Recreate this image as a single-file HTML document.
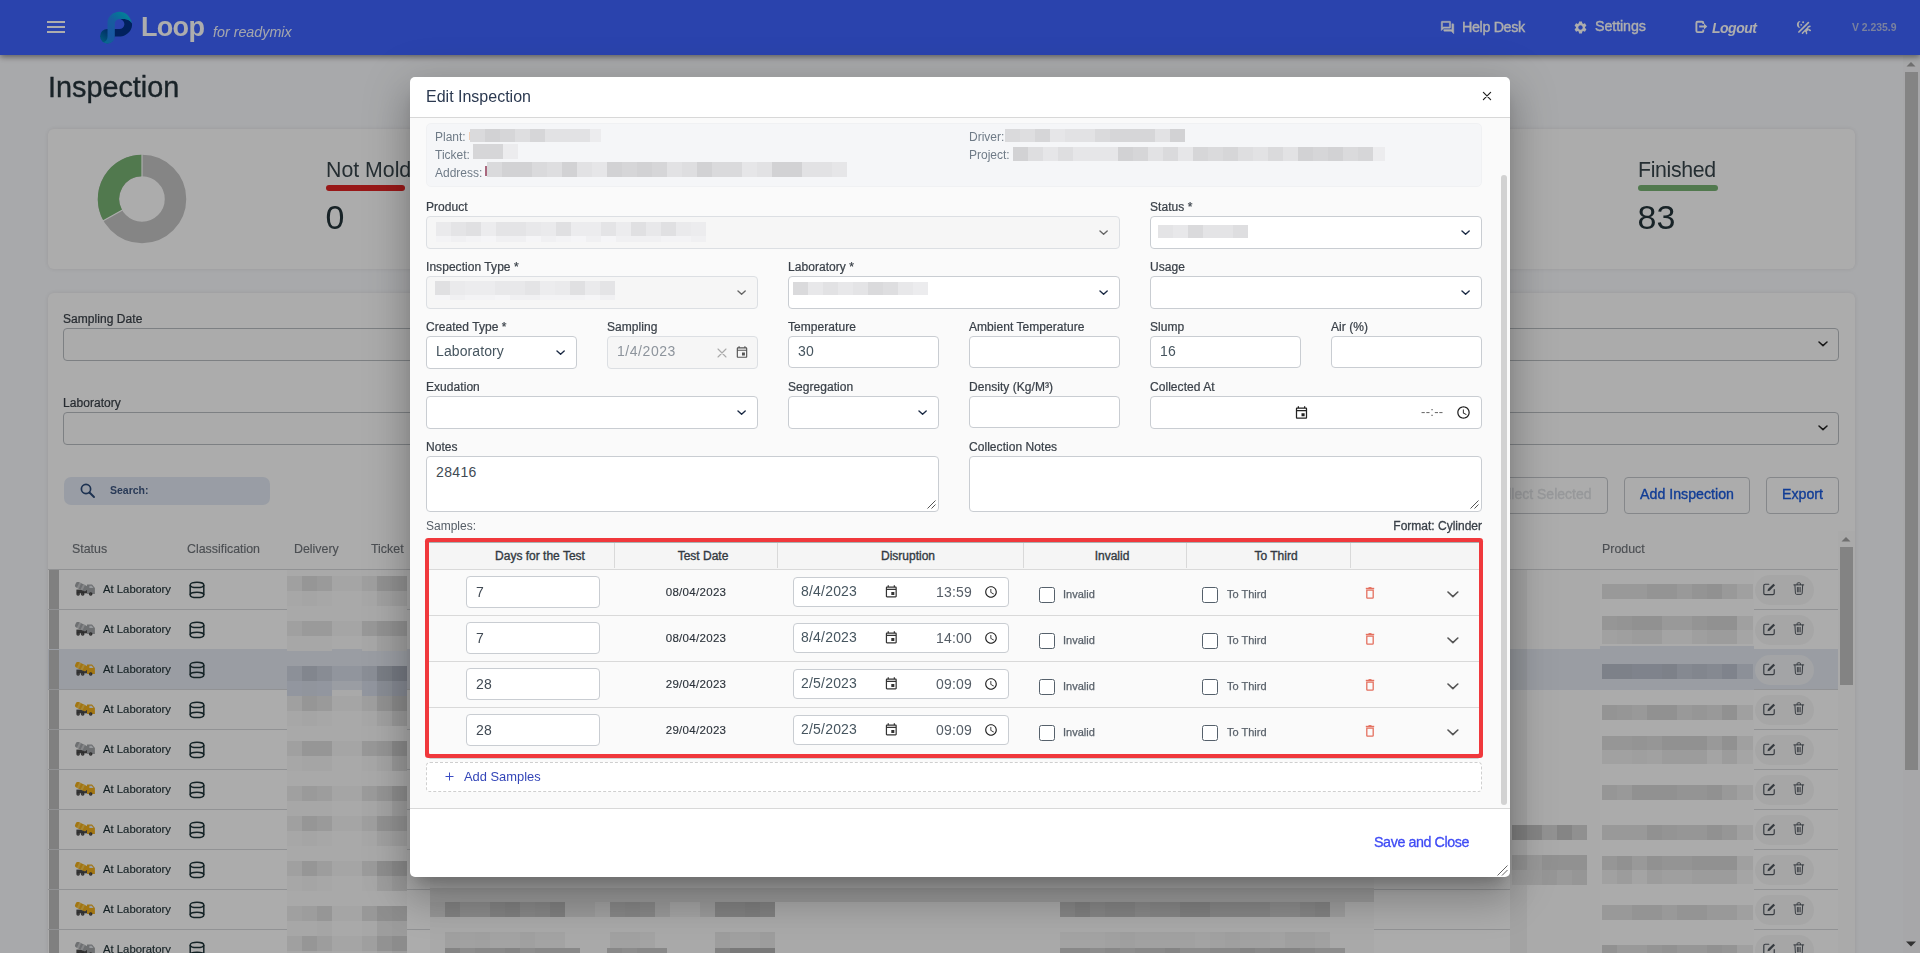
<!DOCTYPE html><html><head><meta charset="utf-8"><title>Inspection</title><style>
*{box-sizing:border-box;margin:0;padding:0}
html,body{width:1920px;height:953px;overflow:hidden;background:#f7f8fb;font-family:"Liberation Sans",sans-serif;color:#1f2d3a}
.a{position:absolute}
.m{-webkit-text-stroke:0.35px currentColor}
#page{position:absolute;left:0;top:0;width:1920px;height:953px;overflow:hidden}
#bg{position:absolute;left:0;top:0;width:1920px;height:953px;will-change:transform;opacity:.999}
#hdr{position:absolute;left:0;top:0;width:1920px;height:55px;background:#3e64ff;box-shadow:0 2px 6px rgba(0,0,0,.45);z-index:3}
#hdr .t{position:absolute;color:#fff;white-space:nowrap}
.card{position:absolute;background:#fefefe;border-radius:6px;box-shadow:0 0 5px rgba(0,0,0,.10)}
.lbl{position:absolute;font-size:12px;color:#3a4149;white-space:nowrap;-webkit-text-stroke:0.22px currentColor;letter-spacing:.05px}
.inp{position:absolute;background:#fff;border:1px solid #c9cdd2;border-radius:4px}
.inp.dis{background:#f6f6f6;border-color:#dcdfe3}
.txt{position:absolute;white-space:nowrap}
#ovl{position:absolute;left:0;top:0;width:1920px;height:953px;background:rgba(0,0,0,.32);z-index:5}
#modal{position:absolute;left:410px;top:77px;width:1100px;height:800px;background:#fff;border-radius:5px;z-index:10;box-shadow:0 11px 15px -7px rgba(0,0,0,.22),0 24px 38px 3px rgba(0,0,0,.15),0 9px 46px 8px rgba(0,0,0,.13);overflow:hidden}
#mbody{position:absolute;left:0;top:41px;width:1100px;height:690px;background:#fafafa;border-top:1px solid #d9d9d9;border-bottom:1px solid #d9d9d9}
.row{position:absolute;left:0;width:1920px}
</style></head><body><div id="page"><div id="bg">
<div id="hdr">
<div class="a" style="left:47px;top:21px;width:18px;height:2px;background:#fff"></div>
<div class="a" style="left:47px;top:26px;width:18px;height:2px;background:#fff"></div>
<div class="a" style="left:47px;top:31px;width:18px;height:2px;background:#fff"></div>
<svg class="a" style="left:94px;top:6px" width="48" height="44" viewBox="0 0 48 44">
<defs>
<linearGradient id="lg1" gradientUnits="userSpaceOnUse" x1="10" y1="37" x2="36" y2="9"><stop offset="0" stop-color="#0aa0cc"/><stop offset=".22" stop-color="#2480ee"/><stop offset=".6" stop-color="#2288ea"/><stop offset=".85" stop-color="#06b0e0"/><stop offset="1" stop-color="#0bc0e6"/></linearGradient>
<linearGradient id="lg2" gradientUnits="userSpaceOnUse" x1="17" y1="24" x2="8" y2="36"><stop offset="0" stop-color="#003a90"/><stop offset="1" stop-color="#0086b8"/></linearGradient>
</defs>
<circle cx="13.300" cy="30.200" r="7.200" fill="url(#lg2)"/>
<path d="M26.500 13 L31 13 C34 13.200 36.500 14.800 37.900 17.200 C38.600 21 36.800 24.800 33.500 27.600 C31.200 29.600 28.800 30.600 26.500 30.600 L20 30.600 L20 23.100 L25.400 23.100 C28 23 30.200 21 30.400 18.400 C30.500 16 29 14 26.500 13 Z" fill="#00328a"/>
<path d="M37.900 17.200 C36.200 9.500 30.500 5.700 25.500 5.800 C19 6 13.600 10.200 13.500 17 L13.500 30.500 C13.500 33.500 12 35.600 9.300 36.300 C10.800 37.200 12.300 37.500 13.600 37.400 C17.600 37.300 20.800 34.800 20.800 30.500 L20.800 17 C21.300 14.400 23.500 13.200 26 13.100 L30.500 13.100 C33.500 13.300 36.200 14.800 37.900 17.200 Z" fill="url(#lg1)"/>
</svg>
<div class="t" style="left:141px;top:10.5px;font-size:27px;font-weight:bold;letter-spacing:-0.7px;line-height:32px">Loop</div>
<div class="t" style="left:213px;top:23.7px;font-size:14.3px;font-style:italic;line-height:17px;opacity:.93">for readymix</div>
<svg class="a" style="left:1440px;top:20px" width="15" height="15" viewBox="0 0 24 24"><path fill="#fff" stroke="#fff" stroke-width=".7" stroke-linejoin="round" d="M15 4v7H5.170L4 12.170V4h11m1-2H3c-.55 0-1 .45-1 1v14l4-4h10c.55 0 1-.45 1-1V3c0-.55-.45-1-1-1zm5 4h-2v9H6v2c0 .55.45 1 1 1h11l4 4V7c0-.55-.45-1-1-1z"/></svg>
<div class="t m" style="left:1462px;top:17.8px;font-size:14.3px;line-height:18px;letter-spacing:-0.35px">Help Desk</div>
<svg class="a" style="left:1573px;top:19.5px" width="15" height="15" viewBox="0 0 24 24"><path fill="#fff" d="M19.14 12.94c.04-.3.06-.61.06-.94 0-.32-.02-.64-.07-.94l2.030-1.580c.18-.14.23-.41.12-.61l-1.920-3.320c-.12-.22-.37-.29-.59-.22l-2.390.96c-.5-.38-1.030-.7-1.620-.94l-.36-2.540c-.04-.24-.24-.41-.48-.41h-3.840c-.24 0-.43.17-.47.41l-.36 2.540c-.59.24-1.130.57-1.620.94l-2.390-.96c-.22-.08-.47 0-.59.22L2.740 8.870c-.12.21-.08.47.12.61l2.030 1.580c-.05.3-.09.63-.09.94s.02.64.07.94l-2.030 1.580c-.18.14-.23.41-.12.61l1.920 3.320c.12.22.37.29.59.22l2.390-.96c.5.38 1.030.7 1.620.94l.36 2.540c.05.24.24.41.48.41h3.840c.24 0 .44-.17.47-.41l.36-2.540c.59-.24 1.130-.56 1.620-.94l2.390.96c.22.08.47 0 .59-.22l1.920-3.320c.12-.22.07-.47-.12-.61l-2.010-1.580zM12 15.600c-1.980 0-3.600-1.620-3.600-3.600s1.620-3.600 3.600-3.600 3.600 1.620 3.600 3.600-1.620 3.600-3.600 3.600z"/></svg>
<div class="t m" style="left:1595px;top:17px;font-size:14.3px;line-height:18px;letter-spacing:-0.1px">Settings</div>
<svg class="a" style="left:1690px;top:14px" width="24" height="26" viewBox="0 0 24 26"><path d="M13.300 10 V8.900 C13.300 8.200 12.800 7.700 12.100 7.700 H7.600 C6.900 7.700 6.400 8.200 6.400 8.900 V16.900 C6.400 17.600 6.900 18.100 7.600 18.100 H12.100 C12.800 18.100 13.300 17.600 13.300 16.900 V15.500" fill="none" stroke="#fff" stroke-width="1.900"/><path d="M9.200 11.500 H14 V9.600 L17.300 12.550 L14 15.500 V13.600 H9.200 Z" fill="#fff"/></svg>
<div class="t" style="left:1712px;top:18.5px;font-size:14px;line-height:18px;font-weight:bold;font-style:italic;letter-spacing:-0.5px">Logout</div>
<svg class="a" style="left:1791px;top:14px" width="24" height="26" viewBox="0 0 24 26">
<path d="M9.600 6.900 C7.400 6.700 5.900 8.400 5.900 10.400 C5.900 12.600 7.600 14.100 9.600 13.800 C8.400 13 7.800 11.800 7.800 10.400 C7.800 9 8.500 7.700 9.600 6.900 Z" fill="#fff"/>
<circle cx="12.100" cy="8.200" r="1" fill="#fff"/><circle cx="10.200" cy="10.800" r=".9" fill="#fff"/>
<path d="M17.400 8.600 L7.900 18" stroke="#fff" stroke-width="1.700" stroke-linecap="round"/>
<path d="M12.300 17.300 L16.900 12.700 A3.300 3.300 0 0 1 12.300 17.300 Z" fill="#fff"/>
<path d="M17.200 13 L19 12.300 M17.800 15.800 L19.300 16.500 M15.300 17.800 L15.600 19.500 M12.800 17.700 L11.400 19.300" stroke="#fff" stroke-width="1.500" stroke-linecap="round"/>
</svg>
<div class="t" style="left:1852px;top:21.5px;font-size:10.4px;line-height:12px;font-weight:bold;color:#b4bfea;letter-spacing:0">V 2.235.9</div>
</div>
<div class="txt m" style="left:48px;top:69.500px;font-size:28.800px;line-height:34px;color:#26343c;letter-spacing:0">Inspection</div>
<div class="card" style="left:48px;top:129px;width:1807px;height:140px"></div>
<svg class="a" style="left:96px;top:153px" width="92" height="92" viewBox="-46 -46 92 92">
<circle r="33.500" fill="none" stroke="#c4c4c4" stroke-width="21.500"/>
<path d="M0 -33.500 A33.500 33.500 0 0 0 -29.200 16.400" fill="none" stroke="#78b373" stroke-width="21.500"/>
<path d="M0 -45 L0 -22 M-39.200 22 L-19.500 11" stroke="#fefefe" stroke-width="1.200"/>
</svg>
<div class="txt" style="left:326px;top:157px;font-size:21.300px;line-height:26px;color:#37444b;width:84px;overflow:hidden">Not Molded</div>
<div class="a" style="left:326px;top:185px;width:79px;height:5.500px;border-radius:3px;background:#e02424"></div>
<div class="txt" style="left:325.500px;top:196px;font-size:34px;line-height:42px;color:#24343a">0</div>
<div class="txt" style="left:1638px;top:157px;font-size:21.300px;line-height:26px;color:#37444b;letter-spacing:-.35px">Finished</div>
<div class="a" style="left:1638px;top:185px;width:80px;height:5.500px;border-radius:3px;background:#78b373"></div>
<div class="txt" style="left:1637.500px;top:196px;font-size:34px;line-height:42px;color:#24343a">83</div>
<div class="card" style="left:48px;top:293px;width:1807px;height:700px"></div>
<div class="lbl" style="left:63px;top:312px;line-height:14px">Sampling Date</div>
<div class="inp" style="left:63px;top:328px;width:1776px;height:33px;background:#fdfdfd;border-color:#b9bdc2"></div>
<svg class="a" style="left:1818.0px;top:341.42px" width="10" height="6.16" viewBox="-1 -1 10 6.16"><path d="M0 0 L4.0 3.66 L8 0" fill="none" stroke="#222" stroke-width="1.5" stroke-linecap="round" stroke-linejoin="round"/></svg>
<div class="lbl" style="left:63px;top:396px;line-height:14px">Laboratory</div>
<div class="inp" style="left:63px;top:412px;width:1776px;height:33px;background:#fdfdfd;border-color:#b9bdc2"></div>
<svg class="a" style="left:1818.0px;top:425.42px" width="10" height="6.16" viewBox="-1 -1 10 6.16"><path d="M0 0 L4.0 3.66 L8 0" fill="none" stroke="#222" stroke-width="1.5" stroke-linecap="round" stroke-linejoin="round"/></svg>
<div class="a" style="left:64px;top:477px;width:206px;height:28px;border-radius:7px;background:#e2e8f3"></div>
<svg class="a" style="left:79px;top:482px" width="18" height="18" viewBox="0 0 18 18"><circle cx="7" cy="7" r="4.600" fill="none" stroke="#2c4a78" stroke-width="1.700"/><path d="M10.500 10.500 L15 15" stroke="#2c4a78" stroke-width="1.900" stroke-linecap="round"/></svg>
<div class="txt" style="left:110px;top:484px;font-size:10.5px;line-height:13px;font-weight:bold;color:#3d5680">Search:</div>
<div class="inp" style="left:1400px;top:477px;width:208px;height:37px;border-color:#c4c8cc;background:transparent"></div>
<div class="txt m" style="left:1461.500px;top:485px;font-size:14px;line-height:18px;color:#dfe1e4;width:130px;text-align:right">Collect Selected</div>
<div class="inp" style="left:1624px;top:477px;width:126px;height:37px;border-color:#c4c8cc;background:transparent"></div>
<div class="txt m" style="left:1624px;top:485px;width:126px;text-align:center;font-size:14.200px;line-height:18px;color:#1a5adc">Add Inspection</div>
<div class="inp" style="left:1766px;top:477px;width:73px;height:37px;border-color:#c4c8cc;background:transparent"></div>
<div class="txt m" style="left:1766px;top:485px;width:73px;text-align:center;font-size:14.200px;line-height:18px;color:#1a5adc">Export</div>
<div class="txt" style="left:72px;top:541px;font-size:12.400px;line-height:16px;color:#70757b;-webkit-text-stroke:.15px #70757b">Status</div>
<div class="txt" style="left:187px;top:541px;font-size:12.400px;line-height:16px;color:#70757b;-webkit-text-stroke:.15px #70757b">Classification</div>
<div class="txt" style="left:294px;top:541px;font-size:12.400px;line-height:16px;color:#70757b;-webkit-text-stroke:.15px #70757b">Delivery</div>
<div class="txt" style="left:371px;top:541px;font-size:12.400px;line-height:16px;color:#70757b;-webkit-text-stroke:.15px #70757b">Ticket</div>
<div class="txt" style="left:1602px;top:541px;font-size:12.400px;line-height:16px;color:#70757b;-webkit-text-stroke:.15px #70757b">Product</div>
<div class="a" style="left:48px;top:569px;width:1790px;height:1px;background:#d4d6d9"></div>
<div class="a" style="left:49px;top:570px;width:10px;height:39px;background:#bdbdbd"></div>
<div class="a" style="left:48px;top:609px;width:1790px;height:1px;background:#d6d8db"></div>
<svg class="a" style="left:74px;top:582.0px" width="22" height="16" viewBox="0 0 22 16">
<rect x="2.400" y="7.600" width="12.800" height="3.700" fill="#4d4d4d"/>
<g transform="rotate(25 7 5)"><rect x="0.800" y="1.500" width="12.600" height="6" rx="2.100" fill="#a2a5a8"/><rect x="3.600" y="1.500" width="2" height="6" fill="#c6c8cb"/><rect x="7.800" y="1.500" width="2" height="6" fill="#c6c8cb"/></g>
<path d="M13 2.600 L18 2.600 L20.900 6 L20.900 11.900 L13 11.900 Z" fill="#a2a5a8"/>
<path d="M15.400 3.700 L17.700 3.700 L19.500 6.100 L15.400 6.100 Z" fill="#dfe3e8"/>
<circle cx="4.100" cy="12" r="1.750" fill="#3d3d3d"/><circle cx="8.700" cy="12" r="1.750" fill="#3d3d3d"/><circle cx="16.700" cy="12" r="1.750" fill="#3d3d3d"/>
<circle cx="4.100" cy="12" r=".6" fill="#999"/><circle cx="8.700" cy="12" r=".6" fill="#999"/><circle cx="16.700" cy="12" r=".6" fill="#999"/>
</svg>
<div class="txt" style="left:103px;top:581.5px;font-size:11.300px;line-height:15px;color:#1f3136;-webkit-text-stroke:.17px #1f3136">At Laboratory</div>
<svg class="a" style="left:188px;top:579.6px" width="18" height="20" viewBox="0 0 18 20"><g fill="none" stroke="#1f3439" stroke-width="1.500">
<ellipse cx="9" cy="4.900" rx="6.800" ry="2.700"/><ellipse cx="9" cy="14.900" rx="6.800" ry="2.700"/><path d="M2.200 4.900 V14.900 M15.800 4.900 V14.900"/></g></svg>
<div class="a" style="left:1754.500px;top:574.5px;width:59.500px;height:30.500px;border-radius:16px;background:#f5f5f5"></div>
<svg class="a" style="left:1761.7px;top:582.2px" width="14.500" height="14.500" viewBox="0 0 16 16"><g fill="none" stroke="#4f565e" stroke-width="1.300" stroke-linejoin="round" stroke-linecap="round">
<path d="M7.500 2.500 H3.500 C2.700 2.500 2 3.200 2 4 V12.500 C2 13.300 2.700 14 3.500 14 H12 C12.800 14 13.500 13.300 13.500 12.500 V8.500"/></g>
<path d="M6 10.200 L6.600 7.800 L12.600 1.800 L14.400 3.600 L8.400 9.600 Z" fill="#4f565e"/></svg>
<svg class="a" style="left:1793px;top:582.3px" width="11.600" height="13.200" viewBox="0 0 14 16"><g fill="none" stroke="#4f565e" stroke-width="1.200" stroke-linecap="round" stroke-linejoin="round">
<path d="M1 3.500 H13"/><path d="M5 3.200 V1.800 C5 1.400 5.300 1 5.800 1 H8.200 C8.700 1 9 1.400 9 1.800 V3.200"/><path d="M2.300 3.800 L2.900 13.600 C2.950 14.400 3.500 15 4.300 15 H9.700 C10.500 15 11.050 14.400 11.100 13.600 L11.700 3.800"/><path d="M5.300 6.500 V12 M7 6.500 V12 M8.700 6.500 V12" stroke-width="1.100"/></g></svg>
<div class="a" style="left:49px;top:610px;width:10px;height:39px;background:#bdbdbd"></div>
<div class="a" style="left:48px;top:649px;width:1790px;height:1px;background:#d6d8db"></div>
<svg class="a" style="left:74px;top:622.0px" width="22" height="16" viewBox="0 0 22 16">
<rect x="2.400" y="7.600" width="12.800" height="3.700" fill="#4d4d4d"/>
<g transform="rotate(25 7 5)"><rect x="0.800" y="1.500" width="12.600" height="6" rx="2.100" fill="#a2a5a8"/><rect x="3.600" y="1.500" width="2" height="6" fill="#c6c8cb"/><rect x="7.800" y="1.500" width="2" height="6" fill="#c6c8cb"/></g>
<path d="M13 2.600 L18 2.600 L20.900 6 L20.900 11.900 L13 11.900 Z" fill="#a2a5a8"/>
<path d="M15.400 3.700 L17.700 3.700 L19.500 6.100 L15.400 6.100 Z" fill="#dfe3e8"/>
<circle cx="4.100" cy="12" r="1.750" fill="#3d3d3d"/><circle cx="8.700" cy="12" r="1.750" fill="#3d3d3d"/><circle cx="16.700" cy="12" r="1.750" fill="#3d3d3d"/>
<circle cx="4.100" cy="12" r=".6" fill="#999"/><circle cx="8.700" cy="12" r=".6" fill="#999"/><circle cx="16.700" cy="12" r=".6" fill="#999"/>
</svg>
<div class="txt" style="left:103px;top:621.5px;font-size:11.300px;line-height:15px;color:#1f3136;-webkit-text-stroke:.17px #1f3136">At Laboratory</div>
<svg class="a" style="left:188px;top:619.6px" width="18" height="20" viewBox="0 0 18 20"><g fill="none" stroke="#1f3439" stroke-width="1.500">
<ellipse cx="9" cy="4.900" rx="6.800" ry="2.700"/><ellipse cx="9" cy="14.900" rx="6.800" ry="2.700"/><path d="M2.200 4.900 V14.900 M15.800 4.900 V14.900"/></g></svg>
<div class="a" style="left:1754.500px;top:614.5px;width:59.500px;height:30.500px;border-radius:16px;background:#f5f5f5"></div>
<svg class="a" style="left:1761.7px;top:622.2px" width="14.500" height="14.500" viewBox="0 0 16 16"><g fill="none" stroke="#4f565e" stroke-width="1.300" stroke-linejoin="round" stroke-linecap="round">
<path d="M7.500 2.500 H3.500 C2.700 2.500 2 3.200 2 4 V12.500 C2 13.300 2.700 14 3.500 14 H12 C12.800 14 13.500 13.300 13.500 12.500 V8.500"/></g>
<path d="M6 10.200 L6.600 7.800 L12.600 1.800 L14.400 3.600 L8.400 9.600 Z" fill="#4f565e"/></svg>
<svg class="a" style="left:1793px;top:622.3px" width="11.600" height="13.200" viewBox="0 0 14 16"><g fill="none" stroke="#4f565e" stroke-width="1.200" stroke-linecap="round" stroke-linejoin="round">
<path d="M1 3.500 H13"/><path d="M5 3.200 V1.800 C5 1.400 5.300 1 5.800 1 H8.200 C8.700 1 9 1.400 9 1.800 V3.200"/><path d="M2.300 3.800 L2.900 13.600 C2.950 14.400 3.500 15 4.300 15 H9.700 C10.500 15 11.050 14.400 11.100 13.600 L11.700 3.800"/><path d="M5.300 6.500 V12 M7 6.500 V12 M8.700 6.500 V12" stroke-width="1.100"/></g></svg>
<div class="a" style="left:48px;top:649px;width:1790px;height:41px;background:#e3e8f0"></div>
<div class="a" style="left:49px;top:650px;width:10px;height:39px;background:#bdbdbd"></div>
<div class="a" style="left:48px;top:689px;width:1790px;height:1px;background:#d6d8db"></div>
<svg class="a" style="left:74px;top:662.0px" width="22" height="16" viewBox="0 0 22 16">
<rect x="2.400" y="7.600" width="12.800" height="3.700" fill="#4d4d4d"/>
<g transform="rotate(25 7 5)"><rect x="0.800" y="1.500" width="12.600" height="6" rx="2.100" fill="#efae1d"/><rect x="3.600" y="1.500" width="2" height="6" fill="#f6c84e"/><rect x="7.800" y="1.500" width="2" height="6" fill="#f6c84e"/></g>
<path d="M13 2.600 L18 2.600 L20.900 6 L20.900 11.900 L13 11.900 Z" fill="#efae1d"/>
<path d="M15.400 3.700 L17.700 3.700 L19.500 6.100 L15.400 6.100 Z" fill="#e8eef6"/>
<circle cx="4.100" cy="12" r="1.750" fill="#3d3d3d"/><circle cx="8.700" cy="12" r="1.750" fill="#3d3d3d"/><circle cx="16.700" cy="12" r="1.750" fill="#3d3d3d"/>
<circle cx="4.100" cy="12" r=".6" fill="#999"/><circle cx="8.700" cy="12" r=".6" fill="#999"/><circle cx="16.700" cy="12" r=".6" fill="#999"/>
</svg>
<div class="txt" style="left:103px;top:661.5px;font-size:11.300px;line-height:15px;color:#1f3136;-webkit-text-stroke:.17px #1f3136">At Laboratory</div>
<svg class="a" style="left:188px;top:659.6px" width="18" height="20" viewBox="0 0 18 20"><g fill="none" stroke="#1f3439" stroke-width="1.500">
<ellipse cx="9" cy="4.900" rx="6.800" ry="2.700"/><ellipse cx="9" cy="14.900" rx="6.800" ry="2.700"/><path d="M2.200 4.900 V14.900 M15.800 4.900 V14.900"/></g></svg>
<div class="a" style="left:1754.500px;top:654.5px;width:59.500px;height:30.500px;border-radius:16px;background:#f0f2f5"></div>
<svg class="a" style="left:1761.7px;top:662.2px" width="14.500" height="14.500" viewBox="0 0 16 16"><g fill="none" stroke="#4f565e" stroke-width="1.300" stroke-linejoin="round" stroke-linecap="round">
<path d="M7.500 2.500 H3.500 C2.700 2.500 2 3.200 2 4 V12.500 C2 13.300 2.700 14 3.500 14 H12 C12.800 14 13.500 13.300 13.500 12.500 V8.500"/></g>
<path d="M6 10.200 L6.600 7.800 L12.600 1.800 L14.400 3.600 L8.400 9.600 Z" fill="#4f565e"/></svg>
<svg class="a" style="left:1793px;top:662.3px" width="11.600" height="13.200" viewBox="0 0 14 16"><g fill="none" stroke="#4f565e" stroke-width="1.200" stroke-linecap="round" stroke-linejoin="round">
<path d="M1 3.500 H13"/><path d="M5 3.200 V1.800 C5 1.400 5.300 1 5.800 1 H8.200 C8.700 1 9 1.400 9 1.800 V3.200"/><path d="M2.300 3.800 L2.900 13.600 C2.950 14.400 3.500 15 4.300 15 H9.700 C10.500 15 11.050 14.400 11.100 13.600 L11.700 3.800"/><path d="M5.300 6.500 V12 M7 6.500 V12 M8.700 6.500 V12" stroke-width="1.100"/></g></svg>
<div class="a" style="left:49px;top:690px;width:10px;height:39px;background:#bdbdbd"></div>
<div class="a" style="left:48px;top:729px;width:1790px;height:1px;background:#d6d8db"></div>
<svg class="a" style="left:74px;top:702.0px" width="22" height="16" viewBox="0 0 22 16">
<rect x="2.400" y="7.600" width="12.800" height="3.700" fill="#4d4d4d"/>
<g transform="rotate(25 7 5)"><rect x="0.800" y="1.500" width="12.600" height="6" rx="2.100" fill="#efae1d"/><rect x="3.600" y="1.500" width="2" height="6" fill="#f6c84e"/><rect x="7.800" y="1.500" width="2" height="6" fill="#f6c84e"/></g>
<path d="M13 2.600 L18 2.600 L20.900 6 L20.900 11.900 L13 11.900 Z" fill="#efae1d"/>
<path d="M15.400 3.700 L17.700 3.700 L19.500 6.100 L15.400 6.100 Z" fill="#e8eef6"/>
<circle cx="4.100" cy="12" r="1.750" fill="#3d3d3d"/><circle cx="8.700" cy="12" r="1.750" fill="#3d3d3d"/><circle cx="16.700" cy="12" r="1.750" fill="#3d3d3d"/>
<circle cx="4.100" cy="12" r=".6" fill="#999"/><circle cx="8.700" cy="12" r=".6" fill="#999"/><circle cx="16.700" cy="12" r=".6" fill="#999"/>
</svg>
<div class="txt" style="left:103px;top:701.5px;font-size:11.300px;line-height:15px;color:#1f3136;-webkit-text-stroke:.17px #1f3136">At Laboratory</div>
<svg class="a" style="left:188px;top:699.6px" width="18" height="20" viewBox="0 0 18 20"><g fill="none" stroke="#1f3439" stroke-width="1.500">
<ellipse cx="9" cy="4.900" rx="6.800" ry="2.700"/><ellipse cx="9" cy="14.900" rx="6.800" ry="2.700"/><path d="M2.200 4.900 V14.900 M15.800 4.900 V14.900"/></g></svg>
<div class="a" style="left:1754.500px;top:694.5px;width:59.500px;height:30.500px;border-radius:16px;background:#f5f5f5"></div>
<svg class="a" style="left:1761.7px;top:702.2px" width="14.500" height="14.500" viewBox="0 0 16 16"><g fill="none" stroke="#4f565e" stroke-width="1.300" stroke-linejoin="round" stroke-linecap="round">
<path d="M7.500 2.500 H3.500 C2.700 2.500 2 3.200 2 4 V12.500 C2 13.300 2.700 14 3.500 14 H12 C12.800 14 13.500 13.300 13.500 12.500 V8.500"/></g>
<path d="M6 10.200 L6.600 7.800 L12.600 1.800 L14.400 3.600 L8.400 9.600 Z" fill="#4f565e"/></svg>
<svg class="a" style="left:1793px;top:702.3px" width="11.600" height="13.200" viewBox="0 0 14 16"><g fill="none" stroke="#4f565e" stroke-width="1.200" stroke-linecap="round" stroke-linejoin="round">
<path d="M1 3.500 H13"/><path d="M5 3.200 V1.800 C5 1.400 5.300 1 5.800 1 H8.200 C8.700 1 9 1.400 9 1.800 V3.200"/><path d="M2.300 3.800 L2.900 13.600 C2.950 14.400 3.500 15 4.300 15 H9.700 C10.500 15 11.050 14.400 11.100 13.600 L11.700 3.800"/><path d="M5.300 6.500 V12 M7 6.500 V12 M8.700 6.500 V12" stroke-width="1.100"/></g></svg>
<div class="a" style="left:49px;top:730px;width:10px;height:39px;background:#bdbdbd"></div>
<div class="a" style="left:48px;top:769px;width:1790px;height:1px;background:#d6d8db"></div>
<svg class="a" style="left:74px;top:742.0px" width="22" height="16" viewBox="0 0 22 16">
<rect x="2.400" y="7.600" width="12.800" height="3.700" fill="#4d4d4d"/>
<g transform="rotate(25 7 5)"><rect x="0.800" y="1.500" width="12.600" height="6" rx="2.100" fill="#a2a5a8"/><rect x="3.600" y="1.500" width="2" height="6" fill="#c6c8cb"/><rect x="7.800" y="1.500" width="2" height="6" fill="#c6c8cb"/></g>
<path d="M13 2.600 L18 2.600 L20.900 6 L20.900 11.900 L13 11.900 Z" fill="#a2a5a8"/>
<path d="M15.400 3.700 L17.700 3.700 L19.500 6.100 L15.400 6.100 Z" fill="#dfe3e8"/>
<circle cx="4.100" cy="12" r="1.750" fill="#3d3d3d"/><circle cx="8.700" cy="12" r="1.750" fill="#3d3d3d"/><circle cx="16.700" cy="12" r="1.750" fill="#3d3d3d"/>
<circle cx="4.100" cy="12" r=".6" fill="#999"/><circle cx="8.700" cy="12" r=".6" fill="#999"/><circle cx="16.700" cy="12" r=".6" fill="#999"/>
</svg>
<div class="txt" style="left:103px;top:741.5px;font-size:11.300px;line-height:15px;color:#1f3136;-webkit-text-stroke:.17px #1f3136">At Laboratory</div>
<svg class="a" style="left:188px;top:739.6px" width="18" height="20" viewBox="0 0 18 20"><g fill="none" stroke="#1f3439" stroke-width="1.500">
<ellipse cx="9" cy="4.900" rx="6.800" ry="2.700"/><ellipse cx="9" cy="14.900" rx="6.800" ry="2.700"/><path d="M2.200 4.900 V14.900 M15.800 4.900 V14.900"/></g></svg>
<div class="a" style="left:1754.500px;top:734.5px;width:59.500px;height:30.500px;border-radius:16px;background:#f5f5f5"></div>
<svg class="a" style="left:1761.7px;top:742.2px" width="14.500" height="14.500" viewBox="0 0 16 16"><g fill="none" stroke="#4f565e" stroke-width="1.300" stroke-linejoin="round" stroke-linecap="round">
<path d="M7.500 2.500 H3.500 C2.700 2.500 2 3.200 2 4 V12.500 C2 13.300 2.700 14 3.500 14 H12 C12.800 14 13.500 13.300 13.500 12.500 V8.500"/></g>
<path d="M6 10.200 L6.600 7.800 L12.600 1.800 L14.400 3.600 L8.400 9.600 Z" fill="#4f565e"/></svg>
<svg class="a" style="left:1793px;top:742.3px" width="11.600" height="13.200" viewBox="0 0 14 16"><g fill="none" stroke="#4f565e" stroke-width="1.200" stroke-linecap="round" stroke-linejoin="round">
<path d="M1 3.500 H13"/><path d="M5 3.200 V1.800 C5 1.400 5.300 1 5.800 1 H8.200 C8.700 1 9 1.400 9 1.800 V3.200"/><path d="M2.300 3.800 L2.900 13.600 C2.950 14.400 3.500 15 4.300 15 H9.700 C10.500 15 11.050 14.400 11.100 13.600 L11.700 3.800"/><path d="M5.300 6.500 V12 M7 6.500 V12 M8.700 6.500 V12" stroke-width="1.100"/></g></svg>
<div class="a" style="left:49px;top:770px;width:10px;height:39px;background:#bdbdbd"></div>
<div class="a" style="left:48px;top:809px;width:1790px;height:1px;background:#d6d8db"></div>
<svg class="a" style="left:74px;top:782.0px" width="22" height="16" viewBox="0 0 22 16">
<rect x="2.400" y="7.600" width="12.800" height="3.700" fill="#4d4d4d"/>
<g transform="rotate(25 7 5)"><rect x="0.800" y="1.500" width="12.600" height="6" rx="2.100" fill="#efae1d"/><rect x="3.600" y="1.500" width="2" height="6" fill="#f6c84e"/><rect x="7.800" y="1.500" width="2" height="6" fill="#f6c84e"/></g>
<path d="M13 2.600 L18 2.600 L20.900 6 L20.900 11.900 L13 11.900 Z" fill="#efae1d"/>
<path d="M15.400 3.700 L17.700 3.700 L19.500 6.100 L15.400 6.100 Z" fill="#e8eef6"/>
<circle cx="4.100" cy="12" r="1.750" fill="#3d3d3d"/><circle cx="8.700" cy="12" r="1.750" fill="#3d3d3d"/><circle cx="16.700" cy="12" r="1.750" fill="#3d3d3d"/>
<circle cx="4.100" cy="12" r=".6" fill="#999"/><circle cx="8.700" cy="12" r=".6" fill="#999"/><circle cx="16.700" cy="12" r=".6" fill="#999"/>
</svg>
<div class="txt" style="left:103px;top:781.5px;font-size:11.300px;line-height:15px;color:#1f3136;-webkit-text-stroke:.17px #1f3136">At Laboratory</div>
<svg class="a" style="left:188px;top:779.6px" width="18" height="20" viewBox="0 0 18 20"><g fill="none" stroke="#1f3439" stroke-width="1.500">
<ellipse cx="9" cy="4.900" rx="6.800" ry="2.700"/><ellipse cx="9" cy="14.900" rx="6.800" ry="2.700"/><path d="M2.200 4.900 V14.900 M15.800 4.900 V14.900"/></g></svg>
<div class="a" style="left:1754.500px;top:774.5px;width:59.500px;height:30.500px;border-radius:16px;background:#f5f5f5"></div>
<svg class="a" style="left:1761.7px;top:782.2px" width="14.500" height="14.500" viewBox="0 0 16 16"><g fill="none" stroke="#4f565e" stroke-width="1.300" stroke-linejoin="round" stroke-linecap="round">
<path d="M7.500 2.500 H3.500 C2.700 2.500 2 3.200 2 4 V12.500 C2 13.300 2.700 14 3.500 14 H12 C12.800 14 13.500 13.300 13.500 12.500 V8.500"/></g>
<path d="M6 10.200 L6.600 7.800 L12.600 1.800 L14.400 3.600 L8.400 9.600 Z" fill="#4f565e"/></svg>
<svg class="a" style="left:1793px;top:782.3px" width="11.600" height="13.200" viewBox="0 0 14 16"><g fill="none" stroke="#4f565e" stroke-width="1.200" stroke-linecap="round" stroke-linejoin="round">
<path d="M1 3.500 H13"/><path d="M5 3.200 V1.800 C5 1.400 5.300 1 5.800 1 H8.200 C8.700 1 9 1.400 9 1.800 V3.200"/><path d="M2.300 3.800 L2.900 13.600 C2.950 14.400 3.500 15 4.300 15 H9.700 C10.500 15 11.050 14.400 11.100 13.600 L11.700 3.800"/><path d="M5.300 6.500 V12 M7 6.500 V12 M8.700 6.500 V12" stroke-width="1.100"/></g></svg>
<div class="a" style="left:49px;top:810px;width:10px;height:39px;background:#bdbdbd"></div>
<div class="a" style="left:48px;top:849px;width:1790px;height:1px;background:#d6d8db"></div>
<svg class="a" style="left:74px;top:822.0px" width="22" height="16" viewBox="0 0 22 16">
<rect x="2.400" y="7.600" width="12.800" height="3.700" fill="#4d4d4d"/>
<g transform="rotate(25 7 5)"><rect x="0.800" y="1.500" width="12.600" height="6" rx="2.100" fill="#efae1d"/><rect x="3.600" y="1.500" width="2" height="6" fill="#f6c84e"/><rect x="7.800" y="1.500" width="2" height="6" fill="#f6c84e"/></g>
<path d="M13 2.600 L18 2.600 L20.900 6 L20.900 11.900 L13 11.900 Z" fill="#efae1d"/>
<path d="M15.400 3.700 L17.700 3.700 L19.500 6.100 L15.400 6.100 Z" fill="#e8eef6"/>
<circle cx="4.100" cy="12" r="1.750" fill="#3d3d3d"/><circle cx="8.700" cy="12" r="1.750" fill="#3d3d3d"/><circle cx="16.700" cy="12" r="1.750" fill="#3d3d3d"/>
<circle cx="4.100" cy="12" r=".6" fill="#999"/><circle cx="8.700" cy="12" r=".6" fill="#999"/><circle cx="16.700" cy="12" r=".6" fill="#999"/>
</svg>
<div class="txt" style="left:103px;top:821.5px;font-size:11.300px;line-height:15px;color:#1f3136;-webkit-text-stroke:.17px #1f3136">At Laboratory</div>
<svg class="a" style="left:188px;top:819.6px" width="18" height="20" viewBox="0 0 18 20"><g fill="none" stroke="#1f3439" stroke-width="1.500">
<ellipse cx="9" cy="4.900" rx="6.800" ry="2.700"/><ellipse cx="9" cy="14.900" rx="6.800" ry="2.700"/><path d="M2.200 4.900 V14.900 M15.800 4.900 V14.900"/></g></svg>
<div class="a" style="left:1754.500px;top:814.5px;width:59.500px;height:30.500px;border-radius:16px;background:#f5f5f5"></div>
<svg class="a" style="left:1761.7px;top:822.2px" width="14.500" height="14.500" viewBox="0 0 16 16"><g fill="none" stroke="#4f565e" stroke-width="1.300" stroke-linejoin="round" stroke-linecap="round">
<path d="M7.500 2.500 H3.500 C2.700 2.500 2 3.200 2 4 V12.500 C2 13.300 2.700 14 3.500 14 H12 C12.800 14 13.500 13.300 13.500 12.500 V8.500"/></g>
<path d="M6 10.200 L6.600 7.800 L12.600 1.800 L14.400 3.600 L8.400 9.600 Z" fill="#4f565e"/></svg>
<svg class="a" style="left:1793px;top:822.3px" width="11.600" height="13.200" viewBox="0 0 14 16"><g fill="none" stroke="#4f565e" stroke-width="1.200" stroke-linecap="round" stroke-linejoin="round">
<path d="M1 3.500 H13"/><path d="M5 3.200 V1.800 C5 1.400 5.300 1 5.800 1 H8.200 C8.700 1 9 1.400 9 1.800 V3.200"/><path d="M2.300 3.800 L2.900 13.600 C2.950 14.400 3.500 15 4.300 15 H9.700 C10.500 15 11.050 14.400 11.100 13.600 L11.700 3.800"/><path d="M5.300 6.500 V12 M7 6.500 V12 M8.700 6.500 V12" stroke-width="1.100"/></g></svg>
<div class="a" style="left:49px;top:850px;width:10px;height:39px;background:#bdbdbd"></div>
<div class="a" style="left:48px;top:889px;width:1790px;height:1px;background:#d6d8db"></div>
<svg class="a" style="left:74px;top:862.0px" width="22" height="16" viewBox="0 0 22 16">
<rect x="2.400" y="7.600" width="12.800" height="3.700" fill="#4d4d4d"/>
<g transform="rotate(25 7 5)"><rect x="0.800" y="1.500" width="12.600" height="6" rx="2.100" fill="#efae1d"/><rect x="3.600" y="1.500" width="2" height="6" fill="#f6c84e"/><rect x="7.800" y="1.500" width="2" height="6" fill="#f6c84e"/></g>
<path d="M13 2.600 L18 2.600 L20.900 6 L20.900 11.900 L13 11.900 Z" fill="#efae1d"/>
<path d="M15.400 3.700 L17.700 3.700 L19.500 6.100 L15.400 6.100 Z" fill="#e8eef6"/>
<circle cx="4.100" cy="12" r="1.750" fill="#3d3d3d"/><circle cx="8.700" cy="12" r="1.750" fill="#3d3d3d"/><circle cx="16.700" cy="12" r="1.750" fill="#3d3d3d"/>
<circle cx="4.100" cy="12" r=".6" fill="#999"/><circle cx="8.700" cy="12" r=".6" fill="#999"/><circle cx="16.700" cy="12" r=".6" fill="#999"/>
</svg>
<div class="txt" style="left:103px;top:861.5px;font-size:11.300px;line-height:15px;color:#1f3136;-webkit-text-stroke:.17px #1f3136">At Laboratory</div>
<svg class="a" style="left:188px;top:859.6px" width="18" height="20" viewBox="0 0 18 20"><g fill="none" stroke="#1f3439" stroke-width="1.500">
<ellipse cx="9" cy="4.900" rx="6.800" ry="2.700"/><ellipse cx="9" cy="14.900" rx="6.800" ry="2.700"/><path d="M2.200 4.900 V14.900 M15.800 4.900 V14.900"/></g></svg>
<div class="a" style="left:1754.500px;top:854.5px;width:59.500px;height:30.500px;border-radius:16px;background:#f5f5f5"></div>
<svg class="a" style="left:1761.7px;top:862.2px" width="14.500" height="14.500" viewBox="0 0 16 16"><g fill="none" stroke="#4f565e" stroke-width="1.300" stroke-linejoin="round" stroke-linecap="round">
<path d="M7.500 2.500 H3.500 C2.700 2.500 2 3.200 2 4 V12.500 C2 13.300 2.700 14 3.500 14 H12 C12.800 14 13.500 13.300 13.500 12.500 V8.500"/></g>
<path d="M6 10.200 L6.600 7.800 L12.600 1.800 L14.400 3.600 L8.400 9.600 Z" fill="#4f565e"/></svg>
<svg class="a" style="left:1793px;top:862.3px" width="11.600" height="13.200" viewBox="0 0 14 16"><g fill="none" stroke="#4f565e" stroke-width="1.200" stroke-linecap="round" stroke-linejoin="round">
<path d="M1 3.500 H13"/><path d="M5 3.200 V1.800 C5 1.400 5.300 1 5.800 1 H8.200 C8.700 1 9 1.400 9 1.800 V3.200"/><path d="M2.300 3.800 L2.900 13.600 C2.950 14.400 3.500 15 4.300 15 H9.700 C10.500 15 11.050 14.400 11.100 13.600 L11.700 3.800"/><path d="M5.300 6.500 V12 M7 6.500 V12 M8.700 6.500 V12" stroke-width="1.100"/></g></svg>
<div class="a" style="left:49px;top:890px;width:10px;height:39px;background:#bdbdbd"></div>
<div class="a" style="left:48px;top:929px;width:1790px;height:1px;background:#d6d8db"></div>
<svg class="a" style="left:74px;top:902.0px" width="22" height="16" viewBox="0 0 22 16">
<rect x="2.400" y="7.600" width="12.800" height="3.700" fill="#4d4d4d"/>
<g transform="rotate(25 7 5)"><rect x="0.800" y="1.500" width="12.600" height="6" rx="2.100" fill="#efae1d"/><rect x="3.600" y="1.500" width="2" height="6" fill="#f6c84e"/><rect x="7.800" y="1.500" width="2" height="6" fill="#f6c84e"/></g>
<path d="M13 2.600 L18 2.600 L20.900 6 L20.900 11.900 L13 11.900 Z" fill="#efae1d"/>
<path d="M15.400 3.700 L17.700 3.700 L19.500 6.100 L15.400 6.100 Z" fill="#e8eef6"/>
<circle cx="4.100" cy="12" r="1.750" fill="#3d3d3d"/><circle cx="8.700" cy="12" r="1.750" fill="#3d3d3d"/><circle cx="16.700" cy="12" r="1.750" fill="#3d3d3d"/>
<circle cx="4.100" cy="12" r=".6" fill="#999"/><circle cx="8.700" cy="12" r=".6" fill="#999"/><circle cx="16.700" cy="12" r=".6" fill="#999"/>
</svg>
<div class="txt" style="left:103px;top:901.5px;font-size:11.300px;line-height:15px;color:#1f3136;-webkit-text-stroke:.17px #1f3136">At Laboratory</div>
<svg class="a" style="left:188px;top:899.6px" width="18" height="20" viewBox="0 0 18 20"><g fill="none" stroke="#1f3439" stroke-width="1.500">
<ellipse cx="9" cy="4.900" rx="6.800" ry="2.700"/><ellipse cx="9" cy="14.900" rx="6.800" ry="2.700"/><path d="M2.200 4.900 V14.900 M15.800 4.900 V14.900"/></g></svg>
<div class="a" style="left:1754.500px;top:894.5px;width:59.500px;height:30.500px;border-radius:16px;background:#f5f5f5"></div>
<svg class="a" style="left:1761.7px;top:902.2px" width="14.500" height="14.500" viewBox="0 0 16 16"><g fill="none" stroke="#4f565e" stroke-width="1.300" stroke-linejoin="round" stroke-linecap="round">
<path d="M7.500 2.500 H3.500 C2.700 2.500 2 3.200 2 4 V12.500 C2 13.300 2.700 14 3.500 14 H12 C12.800 14 13.500 13.300 13.500 12.500 V8.500"/></g>
<path d="M6 10.200 L6.600 7.800 L12.600 1.800 L14.400 3.600 L8.400 9.600 Z" fill="#4f565e"/></svg>
<svg class="a" style="left:1793px;top:902.3px" width="11.600" height="13.200" viewBox="0 0 14 16"><g fill="none" stroke="#4f565e" stroke-width="1.200" stroke-linecap="round" stroke-linejoin="round">
<path d="M1 3.500 H13"/><path d="M5 3.200 V1.800 C5 1.400 5.300 1 5.800 1 H8.200 C8.700 1 9 1.400 9 1.800 V3.200"/><path d="M2.300 3.800 L2.900 13.600 C2.950 14.400 3.500 15 4.300 15 H9.700 C10.500 15 11.050 14.400 11.100 13.600 L11.700 3.800"/><path d="M5.300 6.500 V12 M7 6.500 V12 M8.700 6.500 V12" stroke-width="1.100"/></g></svg>
<div class="a" style="left:49px;top:930px;width:10px;height:39px;background:#bdbdbd"></div>
<div class="a" style="left:48px;top:969px;width:1790px;height:1px;background:#d6d8db"></div>
<svg class="a" style="left:74px;top:942.0px" width="22" height="16" viewBox="0 0 22 16">
<rect x="2.400" y="7.600" width="12.800" height="3.700" fill="#4d4d4d"/>
<g transform="rotate(25 7 5)"><rect x="0.800" y="1.500" width="12.600" height="6" rx="2.100" fill="#a2a5a8"/><rect x="3.600" y="1.500" width="2" height="6" fill="#c6c8cb"/><rect x="7.800" y="1.500" width="2" height="6" fill="#c6c8cb"/></g>
<path d="M13 2.600 L18 2.600 L20.900 6 L20.900 11.900 L13 11.900 Z" fill="#a2a5a8"/>
<path d="M15.400 3.700 L17.700 3.700 L19.500 6.100 L15.400 6.100 Z" fill="#dfe3e8"/>
<circle cx="4.100" cy="12" r="1.750" fill="#3d3d3d"/><circle cx="8.700" cy="12" r="1.750" fill="#3d3d3d"/><circle cx="16.700" cy="12" r="1.750" fill="#3d3d3d"/>
<circle cx="4.100" cy="12" r=".6" fill="#999"/><circle cx="8.700" cy="12" r=".6" fill="#999"/><circle cx="16.700" cy="12" r=".6" fill="#999"/>
</svg>
<div class="txt" style="left:103px;top:941.5px;font-size:11.300px;line-height:15px;color:#1f3136;-webkit-text-stroke:.17px #1f3136">At Laboratory</div>
<svg class="a" style="left:188px;top:939.6px" width="18" height="20" viewBox="0 0 18 20"><g fill="none" stroke="#1f3439" stroke-width="1.500">
<ellipse cx="9" cy="4.900" rx="6.800" ry="2.700"/><ellipse cx="9" cy="14.900" rx="6.800" ry="2.700"/><path d="M2.200 4.900 V14.900 M15.800 4.900 V14.900"/></g></svg>
<div class="a" style="left:1754.500px;top:934.5px;width:59.500px;height:30.500px;border-radius:16px;background:#f5f5f5"></div>
<svg class="a" style="left:1761.7px;top:942.2px" width="14.500" height="14.500" viewBox="0 0 16 16"><g fill="none" stroke="#4f565e" stroke-width="1.300" stroke-linejoin="round" stroke-linecap="round">
<path d="M7.500 2.500 H3.500 C2.700 2.500 2 3.200 2 4 V12.500 C2 13.300 2.700 14 3.500 14 H12 C12.800 14 13.500 13.300 13.500 12.500 V8.500"/></g>
<path d="M6 10.200 L6.600 7.800 L12.600 1.800 L14.400 3.600 L8.400 9.600 Z" fill="#4f565e"/></svg>
<svg class="a" style="left:1793px;top:942.3px" width="11.600" height="13.200" viewBox="0 0 14 16"><g fill="none" stroke="#4f565e" stroke-width="1.200" stroke-linecap="round" stroke-linejoin="round">
<path d="M1 3.500 H13"/><path d="M5 3.200 V1.800 C5 1.400 5.300 1 5.800 1 H8.200 C8.700 1 9 1.400 9 1.800 V3.200"/><path d="M2.300 3.800 L2.900 13.600 C2.950 14.400 3.500 15 4.300 15 H9.700 C10.500 15 11.050 14.400 11.100 13.600 L11.700 3.800"/><path d="M5.300 6.500 V12 M7 6.500 V12 M8.700 6.500 V12" stroke-width="1.100"/></g></svg>
<div class="a" style="left:287px;top:570px;width:120px;height:383px;background:#fafafa"></div>
<div class="a" style="left:287px;top:649px;width:120px;height:41px;background:#e3e8f0"></div>
<div class="a" style="left:287px;top:576px;width:15px;height:15px;background:rgb(236,236,236)"></div>
<div class="a" style="left:287px;top:591px;width:15px;height:15px;background:rgb(246,246,246)"></div>
<div class="a" style="left:302px;top:576px;width:15px;height:15px;background:rgb(222,222,222)"></div>
<div class="a" style="left:302px;top:591px;width:15px;height:15px;background:rgb(244,244,244)"></div>
<div class="a" style="left:317px;top:576px;width:15px;height:15px;background:rgb(227,227,227)"></div>
<div class="a" style="left:317px;top:591px;width:15px;height:15px;background:rgb(246,246,246)"></div>
<div class="a" style="left:332px;top:576px;width:15px;height:15px;background:rgb(244,244,244)"></div>
<div class="a" style="left:347px;top:576px;width:15px;height:15px;background:rgb(244,244,244)"></div>
<div class="a" style="left:362px;top:576px;width:15px;height:15px;background:rgb(234,234,234)"></div>
<div class="a" style="left:362px;top:591px;width:15px;height:15px;background:rgb(246,246,246)"></div>
<div class="a" style="left:377px;top:576px;width:15px;height:15px;background:rgb(215,215,215)"></div>
<div class="a" style="left:377px;top:591px;width:15px;height:15px;background:rgb(237,237,237)"></div>
<div class="a" style="left:392px;top:576px;width:15px;height:15px;background:rgb(212,212,212)"></div>
<div class="a" style="left:392px;top:591px;width:15px;height:15px;background:rgb(234,234,234)"></div>
<div class="a" style="left:287px;top:621px;width:15px;height:15px;background:rgb(236,236,236)"></div>
<div class="a" style="left:287px;top:636px;width:15px;height:15px;background:rgb(246,246,246)"></div>
<div class="a" style="left:302px;top:621px;width:15px;height:15px;background:rgb(227,227,227)"></div>
<div class="a" style="left:302px;top:636px;width:15px;height:15px;background:rgb(246,246,246)"></div>
<div class="a" style="left:317px;top:621px;width:15px;height:15px;background:rgb(227,227,227)"></div>
<div class="a" style="left:317px;top:636px;width:15px;height:15px;background:rgb(246,246,246)"></div>
<div class="a" style="left:332px;top:621px;width:15px;height:15px;background:rgb(244,244,244)"></div>
<div class="a" style="left:347px;top:621px;width:15px;height:15px;background:rgb(244,244,244)"></div>
<div class="a" style="left:362px;top:621px;width:15px;height:15px;background:rgb(224,224,224)"></div>
<div class="a" style="left:362px;top:636px;width:15px;height:15px;background:rgb(246,246,246)"></div>
<div class="a" style="left:377px;top:621px;width:15px;height:15px;background:rgb(215,215,215)"></div>
<div class="a" style="left:377px;top:636px;width:15px;height:15px;background:rgb(237,237,237)"></div>
<div class="a" style="left:392px;top:621px;width:15px;height:15px;background:rgb(212,212,212)"></div>
<div class="a" style="left:392px;top:636px;width:15px;height:15px;background:rgb(234,234,234)"></div>
<div class="a" style="left:287px;top:666px;width:15px;height:15px;background:rgb(206,212,224)"></div>
<div class="a" style="left:287px;top:681px;width:15px;height:15px;background:rgb(216,222,234)"></div>
<div class="a" style="left:302px;top:666px;width:15px;height:15px;background:rgb(192,198,210)"></div>
<div class="a" style="left:302px;top:681px;width:15px;height:15px;background:rgb(214,220,232)"></div>
<div class="a" style="left:317px;top:666px;width:15px;height:15px;background:rgb(201,207,219)"></div>
<div class="a" style="left:317px;top:681px;width:15px;height:15px;background:rgb(216,222,234)"></div>
<div class="a" style="left:332px;top:666px;width:15px;height:15px;background:rgb(214,220,232)"></div>
<div class="a" style="left:347px;top:666px;width:15px;height:15px;background:rgb(214,220,232)"></div>
<div class="a" style="left:362px;top:666px;width:15px;height:15px;background:rgb(204,210,222)"></div>
<div class="a" style="left:362px;top:681px;width:15px;height:15px;background:rgb(216,222,234)"></div>
<div class="a" style="left:377px;top:666px;width:15px;height:15px;background:rgb(180,186,198)"></div>
<div class="a" style="left:377px;top:681px;width:15px;height:15px;background:rgb(202,208,220)"></div>
<div class="a" style="left:392px;top:666px;width:15px;height:15px;background:rgb(172,178,190)"></div>
<div class="a" style="left:392px;top:681px;width:15px;height:15px;background:rgb(194,200,212)"></div>
<div class="a" style="left:287px;top:696px;width:15px;height:15px;background:rgb(236,236,236)"></div>
<div class="a" style="left:287px;top:711px;width:15px;height:15px;background:rgb(246,246,246)"></div>
<div class="a" style="left:302px;top:696px;width:15px;height:15px;background:rgb(222,222,222)"></div>
<div class="a" style="left:302px;top:711px;width:15px;height:15px;background:rgb(244,244,244)"></div>
<div class="a" style="left:317px;top:696px;width:15px;height:15px;background:rgb(227,227,227)"></div>
<div class="a" style="left:317px;top:711px;width:15px;height:15px;background:rgb(246,246,246)"></div>
<div class="a" style="left:332px;top:696px;width:15px;height:15px;background:rgb(244,244,244)"></div>
<div class="a" style="left:347px;top:696px;width:15px;height:15px;background:rgb(244,244,244)"></div>
<div class="a" style="left:362px;top:696px;width:15px;height:15px;background:rgb(234,234,234)"></div>
<div class="a" style="left:362px;top:711px;width:15px;height:15px;background:rgb(246,246,246)"></div>
<div class="a" style="left:377px;top:696px;width:15px;height:15px;background:rgb(215,215,215)"></div>
<div class="a" style="left:377px;top:711px;width:15px;height:15px;background:rgb(237,237,237)"></div>
<div class="a" style="left:392px;top:696px;width:15px;height:15px;background:rgb(202,202,202)"></div>
<div class="a" style="left:392px;top:711px;width:15px;height:15px;background:rgb(224,224,224)"></div>
<div class="a" style="left:287px;top:741px;width:15px;height:15px;background:rgb(236,236,236)"></div>
<div class="a" style="left:287px;top:756px;width:15px;height:15px;background:rgb(246,246,246)"></div>
<div class="a" style="left:302px;top:741px;width:15px;height:15px;background:rgb(222,222,222)"></div>
<div class="a" style="left:302px;top:756px;width:15px;height:15px;background:rgb(244,244,244)"></div>
<div class="a" style="left:317px;top:741px;width:15px;height:15px;background:rgb(222,222,222)"></div>
<div class="a" style="left:317px;top:756px;width:15px;height:15px;background:rgb(244,244,244)"></div>
<div class="a" style="left:332px;top:741px;width:15px;height:15px;background:rgb(244,244,244)"></div>
<div class="a" style="left:347px;top:741px;width:15px;height:15px;background:rgb(244,244,244)"></div>
<div class="a" style="left:362px;top:741px;width:15px;height:15px;background:rgb(224,224,224)"></div>
<div class="a" style="left:362px;top:756px;width:15px;height:15px;background:rgb(246,246,246)"></div>
<div class="a" style="left:377px;top:741px;width:15px;height:15px;background:rgb(220,220,220)"></div>
<div class="a" style="left:377px;top:756px;width:15px;height:15px;background:rgb(242,242,242)"></div>
<div class="a" style="left:392px;top:741px;width:15px;height:15px;background:rgb(202,202,202)"></div>
<div class="a" style="left:392px;top:756px;width:15px;height:15px;background:rgb(224,224,224)"></div>
<div class="a" style="left:287px;top:786px;width:15px;height:15px;background:rgb(236,236,236)"></div>
<div class="a" style="left:287px;top:801px;width:15px;height:15px;background:rgb(246,246,246)"></div>
<div class="a" style="left:302px;top:786px;width:15px;height:15px;background:rgb(227,227,227)"></div>
<div class="a" style="left:302px;top:801px;width:15px;height:15px;background:rgb(246,246,246)"></div>
<div class="a" style="left:317px;top:786px;width:15px;height:15px;background:rgb(231,231,231)"></div>
<div class="a" style="left:317px;top:801px;width:15px;height:15px;background:rgb(246,246,246)"></div>
<div class="a" style="left:332px;top:786px;width:15px;height:15px;background:rgb(244,244,244)"></div>
<div class="a" style="left:347px;top:786px;width:15px;height:15px;background:rgb(244,244,244)"></div>
<div class="a" style="left:362px;top:786px;width:15px;height:15px;background:rgb(229,229,229)"></div>
<div class="a" style="left:362px;top:801px;width:15px;height:15px;background:rgb(246,246,246)"></div>
<div class="a" style="left:377px;top:786px;width:15px;height:15px;background:rgb(220,220,220)"></div>
<div class="a" style="left:377px;top:801px;width:15px;height:15px;background:rgb(242,242,242)"></div>
<div class="a" style="left:392px;top:786px;width:15px;height:15px;background:rgb(207,207,207)"></div>
<div class="a" style="left:392px;top:801px;width:15px;height:15px;background:rgb(229,229,229)"></div>
<div class="a" style="left:287px;top:816px;width:15px;height:15px;background:rgb(236,236,236)"></div>
<div class="a" style="left:287px;top:831px;width:15px;height:15px;background:rgb(246,246,246)"></div>
<div class="a" style="left:302px;top:816px;width:15px;height:15px;background:rgb(222,222,222)"></div>
<div class="a" style="left:302px;top:831px;width:15px;height:15px;background:rgb(244,244,244)"></div>
<div class="a" style="left:317px;top:816px;width:15px;height:15px;background:rgb(227,227,227)"></div>
<div class="a" style="left:317px;top:831px;width:15px;height:15px;background:rgb(246,246,246)"></div>
<div class="a" style="left:332px;top:816px;width:15px;height:15px;background:rgb(244,244,244)"></div>
<div class="a" style="left:347px;top:816px;width:15px;height:15px;background:rgb(244,244,244)"></div>
<div class="a" style="left:362px;top:816px;width:15px;height:15px;background:rgb(234,234,234)"></div>
<div class="a" style="left:362px;top:831px;width:15px;height:15px;background:rgb(246,246,246)"></div>
<div class="a" style="left:377px;top:816px;width:15px;height:15px;background:rgb(215,215,215)"></div>
<div class="a" style="left:377px;top:831px;width:15px;height:15px;background:rgb(237,237,237)"></div>
<div class="a" style="left:392px;top:816px;width:15px;height:15px;background:rgb(212,212,212)"></div>
<div class="a" style="left:392px;top:831px;width:15px;height:15px;background:rgb(234,234,234)"></div>
<div class="a" style="left:287px;top:861px;width:15px;height:15px;background:rgb(236,236,236)"></div>
<div class="a" style="left:287px;top:876px;width:15px;height:15px;background:rgb(246,246,246)"></div>
<div class="a" style="left:302px;top:861px;width:15px;height:15px;background:rgb(222,222,222)"></div>
<div class="a" style="left:302px;top:876px;width:15px;height:15px;background:rgb(244,244,244)"></div>
<div class="a" style="left:317px;top:861px;width:15px;height:15px;background:rgb(231,231,231)"></div>
<div class="a" style="left:317px;top:876px;width:15px;height:15px;background:rgb(246,246,246)"></div>
<div class="a" style="left:332px;top:861px;width:15px;height:15px;background:rgb(244,244,244)"></div>
<div class="a" style="left:347px;top:861px;width:15px;height:15px;background:rgb(244,244,244)"></div>
<div class="a" style="left:362px;top:861px;width:15px;height:15px;background:rgb(229,229,229)"></div>
<div class="a" style="left:362px;top:876px;width:15px;height:15px;background:rgb(246,246,246)"></div>
<div class="a" style="left:377px;top:861px;width:15px;height:15px;background:rgb(210,210,210)"></div>
<div class="a" style="left:377px;top:876px;width:15px;height:15px;background:rgb(232,232,232)"></div>
<div class="a" style="left:392px;top:861px;width:15px;height:15px;background:rgb(202,202,202)"></div>
<div class="a" style="left:392px;top:876px;width:15px;height:15px;background:rgb(224,224,224)"></div>
<div class="a" style="left:287px;top:906px;width:15px;height:15px;background:rgb(236,236,236)"></div>
<div class="a" style="left:287px;top:921px;width:15px;height:15px;background:rgb(246,246,246)"></div>
<div class="a" style="left:302px;top:906px;width:15px;height:15px;background:rgb(231,231,231)"></div>
<div class="a" style="left:302px;top:921px;width:15px;height:15px;background:rgb(246,246,246)"></div>
<div class="a" style="left:317px;top:906px;width:15px;height:15px;background:rgb(222,222,222)"></div>
<div class="a" style="left:317px;top:921px;width:15px;height:15px;background:rgb(244,244,244)"></div>
<div class="a" style="left:332px;top:906px;width:15px;height:15px;background:rgb(244,244,244)"></div>
<div class="a" style="left:347px;top:906px;width:15px;height:15px;background:rgb(244,244,244)"></div>
<div class="a" style="left:362px;top:906px;width:15px;height:15px;background:rgb(224,224,224)"></div>
<div class="a" style="left:362px;top:921px;width:15px;height:15px;background:rgb(246,246,246)"></div>
<div class="a" style="left:377px;top:906px;width:15px;height:15px;background:rgb(210,210,210)"></div>
<div class="a" style="left:377px;top:921px;width:15px;height:15px;background:rgb(232,232,232)"></div>
<div class="a" style="left:392px;top:906px;width:15px;height:15px;background:rgb(207,207,207)"></div>
<div class="a" style="left:392px;top:921px;width:15px;height:15px;background:rgb(229,229,229)"></div>
<div class="a" style="left:287px;top:936px;width:15px;height:15px;background:rgb(236,236,236)"></div>
<div class="a" style="left:287px;top:951px;width:15px;height:15px;background:rgb(246,246,246)"></div>
<div class="a" style="left:302px;top:936px;width:15px;height:15px;background:rgb(222,222,222)"></div>
<div class="a" style="left:302px;top:951px;width:15px;height:15px;background:rgb(244,244,244)"></div>
<div class="a" style="left:317px;top:936px;width:15px;height:15px;background:rgb(231,231,231)"></div>
<div class="a" style="left:317px;top:951px;width:15px;height:15px;background:rgb(246,246,246)"></div>
<div class="a" style="left:332px;top:936px;width:15px;height:15px;background:rgb(244,244,244)"></div>
<div class="a" style="left:347px;top:936px;width:15px;height:15px;background:rgb(244,244,244)"></div>
<div class="a" style="left:362px;top:936px;width:15px;height:15px;background:rgb(234,234,234)"></div>
<div class="a" style="left:362px;top:951px;width:15px;height:15px;background:rgb(246,246,246)"></div>
<div class="a" style="left:377px;top:936px;width:15px;height:15px;background:rgb(215,215,215)"></div>
<div class="a" style="left:377px;top:951px;width:15px;height:15px;background:rgb(237,237,237)"></div>
<div class="a" style="left:392px;top:936px;width:15px;height:15px;background:rgb(207,207,207)"></div>
<div class="a" style="left:392px;top:951px;width:15px;height:15px;background:rgb(229,229,229)"></div>
<div class="a" style="left:1510px;top:570px;width:90px;height:383px;background:#fbfbfb"></div>
<div class="a" style="left:1510px;top:649px;width:90px;height:41px;background:#e3e8f0"></div>
<div class="a" style="left:1510px;top:570px;width:17px;height:383px;background:rgba(0,0,0,.045)"></div>
<div class="a" style="left:1512px;top:825px;width:15px;height:15px;background:rgb(186,186,186)"></div>
<div class="a" style="left:1512px;top:855px;width:15px;height:15px;background:rgb(214,214,214)"></div>
<div class="a" style="left:1512px;top:870px;width:15px;height:15px;background:rgb(228,228,228)"></div>
<div class="a" style="left:1527px;top:825px;width:15px;height:15px;background:rgb(196,196,196)"></div>
<div class="a" style="left:1527px;top:855px;width:15px;height:15px;background:rgb(224,224,224)"></div>
<div class="a" style="left:1527px;top:870px;width:15px;height:15px;background:rgb(228,228,228)"></div>
<div class="a" style="left:1542px;top:825px;width:15px;height:15px;background:rgb(216,216,216)"></div>
<div class="a" style="left:1542px;top:855px;width:15px;height:15px;background:rgb(214,214,214)"></div>
<div class="a" style="left:1542px;top:870px;width:15px;height:15px;background:rgb(222,222,222)"></div>
<div class="a" style="left:1557px;top:825px;width:15px;height:15px;background:rgb(196,196,196)"></div>
<div class="a" style="left:1557px;top:855px;width:15px;height:15px;background:rgb(214,214,214)"></div>
<div class="a" style="left:1557px;top:870px;width:15px;height:15px;background:rgb(228,228,228)"></div>
<div class="a" style="left:1572px;top:825px;width:15px;height:15px;background:rgb(212,212,212)"></div>
<div class="a" style="left:1572px;top:855px;width:15px;height:15px;background:rgb(214,214,214)"></div>
<div class="a" style="left:1572px;top:870px;width:15px;height:15px;background:rgb(222,222,222)"></div>
<div class="a" style="left:1600px;top:570px;width:154px;height:383px;background:#fcfcfc"></div>
<div class="a" style="left:1600px;top:646px;width:154px;height:44px;background:#e3e8f0"></div>
<div class="a" style="left:1602px;top:584px;width:15px;height:15px;background:rgb(226,226,226)"></div>
<div class="a" style="left:1617px;top:584px;width:15px;height:15px;background:rgb(226,226,226)"></div>
<div class="a" style="left:1632px;top:584px;width:15px;height:15px;background:rgb(226,226,226)"></div>
<div class="a" style="left:1647px;top:584px;width:15px;height:15px;background:rgb(218,218,218)"></div>
<div class="a" style="left:1662px;top:584px;width:15px;height:15px;background:rgb(218,218,218)"></div>
<div class="a" style="left:1677px;top:584px;width:15px;height:15px;background:rgb(226,226,226)"></div>
<div class="a" style="left:1692px;top:584px;width:15px;height:15px;background:rgb(218,218,218)"></div>
<div class="a" style="left:1707px;top:584px;width:15px;height:15px;background:rgb(214,214,214)"></div>
<div class="a" style="left:1722px;top:584px;width:15px;height:15px;background:rgb(226,226,226)"></div>
<div class="a" style="left:1737px;top:584px;width:16px;height:15px;background:rgb(236,236,236)"></div>
<div class="a" style="left:1602px;top:616px;width:15px;height:14px;background:rgb(222,222,222)"></div>
<div class="a" style="left:1602px;top:630px;width:15px;height:14px;background:rgb(238,238,238)"></div>
<div class="a" style="left:1617px;top:616px;width:15px;height:14px;background:rgb(218,218,218)"></div>
<div class="a" style="left:1617px;top:630px;width:15px;height:14px;background:rgb(234,234,234)"></div>
<div class="a" style="left:1632px;top:616px;width:15px;height:14px;background:rgb(214,214,214)"></div>
<div class="a" style="left:1632px;top:630px;width:15px;height:14px;background:rgb(230,230,230)"></div>
<div class="a" style="left:1647px;top:616px;width:15px;height:14px;background:rgb(214,214,214)"></div>
<div class="a" style="left:1647px;top:630px;width:15px;height:14px;background:rgb(230,230,230)"></div>
<div class="a" style="left:1662px;top:616px;width:15px;height:14px;background:rgb(226,226,226)"></div>
<div class="a" style="left:1662px;top:630px;width:15px;height:14px;background:rgb(242,242,242)"></div>
<div class="a" style="left:1677px;top:616px;width:15px;height:14px;background:rgb(226,226,226)"></div>
<div class="a" style="left:1677px;top:630px;width:15px;height:14px;background:rgb(242,242,242)"></div>
<div class="a" style="left:1692px;top:616px;width:15px;height:14px;background:rgb(218,218,218)"></div>
<div class="a" style="left:1692px;top:630px;width:15px;height:14px;background:rgb(234,234,234)"></div>
<div class="a" style="left:1707px;top:616px;width:15px;height:14px;background:rgb(214,214,214)"></div>
<div class="a" style="left:1707px;top:630px;width:15px;height:14px;background:rgb(230,230,230)"></div>
<div class="a" style="left:1722px;top:616px;width:15px;height:14px;background:rgb(214,214,214)"></div>
<div class="a" style="left:1722px;top:630px;width:15px;height:14px;background:rgb(230,230,230)"></div>
<div class="a" style="left:1737px;top:616px;width:16px;height:14px;background:rgb(236,236,236)"></div>
<div class="a" style="left:1737px;top:630px;width:16px;height:14px;background:rgb(244,244,244)"></div>
<div class="a" style="left:1602px;top:664px;width:15px;height:15px;background:rgb(184,190,202)"></div>
<div class="a" style="left:1617px;top:664px;width:15px;height:15px;background:rgb(184,190,202)"></div>
<div class="a" style="left:1632px;top:664px;width:15px;height:15px;background:rgb(188,194,206)"></div>
<div class="a" style="left:1647px;top:664px;width:15px;height:15px;background:rgb(188,194,206)"></div>
<div class="a" style="left:1662px;top:664px;width:15px;height:15px;background:rgb(184,190,202)"></div>
<div class="a" style="left:1677px;top:664px;width:15px;height:15px;background:rgb(196,202,214)"></div>
<div class="a" style="left:1692px;top:664px;width:15px;height:15px;background:rgb(192,198,210)"></div>
<div class="a" style="left:1707px;top:664px;width:15px;height:15px;background:rgb(196,202,214)"></div>
<div class="a" style="left:1722px;top:664px;width:15px;height:15px;background:rgb(188,194,206)"></div>
<div class="a" style="left:1737px;top:664px;width:16px;height:15px;background:rgb(206,212,224)"></div>
<div class="a" style="left:1602px;top:705px;width:15px;height:15px;background:rgb(218,218,218)"></div>
<div class="a" style="left:1617px;top:705px;width:15px;height:15px;background:rgb(222,222,222)"></div>
<div class="a" style="left:1632px;top:705px;width:15px;height:15px;background:rgb(226,226,226)"></div>
<div class="a" style="left:1647px;top:705px;width:15px;height:15px;background:rgb(214,214,214)"></div>
<div class="a" style="left:1662px;top:705px;width:15px;height:15px;background:rgb(214,214,214)"></div>
<div class="a" style="left:1677px;top:705px;width:15px;height:15px;background:rgb(226,226,226)"></div>
<div class="a" style="left:1692px;top:705px;width:15px;height:15px;background:rgb(222,222,222)"></div>
<div class="a" style="left:1707px;top:705px;width:15px;height:15px;background:rgb(226,226,226)"></div>
<div class="a" style="left:1722px;top:705px;width:15px;height:15px;background:rgb(214,214,214)"></div>
<div class="a" style="left:1737px;top:705px;width:16px;height:15px;background:rgb(236,236,236)"></div>
<div class="a" style="left:1602px;top:736px;width:15px;height:14px;background:rgb(222,222,222)"></div>
<div class="a" style="left:1602px;top:750px;width:15px;height:14px;background:rgb(238,238,238)"></div>
<div class="a" style="left:1617px;top:736px;width:15px;height:14px;background:rgb(222,222,222)"></div>
<div class="a" style="left:1617px;top:750px;width:15px;height:14px;background:rgb(238,238,238)"></div>
<div class="a" style="left:1632px;top:736px;width:15px;height:14px;background:rgb(218,218,218)"></div>
<div class="a" style="left:1632px;top:750px;width:15px;height:14px;background:rgb(234,234,234)"></div>
<div class="a" style="left:1647px;top:736px;width:15px;height:14px;background:rgb(222,222,222)"></div>
<div class="a" style="left:1647px;top:750px;width:15px;height:14px;background:rgb(238,238,238)"></div>
<div class="a" style="left:1662px;top:736px;width:15px;height:14px;background:rgb(214,214,214)"></div>
<div class="a" style="left:1662px;top:750px;width:15px;height:14px;background:rgb(230,230,230)"></div>
<div class="a" style="left:1677px;top:736px;width:15px;height:14px;background:rgb(214,214,214)"></div>
<div class="a" style="left:1677px;top:750px;width:15px;height:14px;background:rgb(230,230,230)"></div>
<div class="a" style="left:1692px;top:736px;width:15px;height:14px;background:rgb(214,214,214)"></div>
<div class="a" style="left:1692px;top:750px;width:15px;height:14px;background:rgb(230,230,230)"></div>
<div class="a" style="left:1707px;top:736px;width:15px;height:14px;background:rgb(226,226,226)"></div>
<div class="a" style="left:1707px;top:750px;width:15px;height:14px;background:rgb(242,242,242)"></div>
<div class="a" style="left:1722px;top:736px;width:15px;height:14px;background:rgb(214,214,214)"></div>
<div class="a" style="left:1722px;top:750px;width:15px;height:14px;background:rgb(230,230,230)"></div>
<div class="a" style="left:1737px;top:736px;width:16px;height:14px;background:rgb(236,236,236)"></div>
<div class="a" style="left:1737px;top:750px;width:16px;height:14px;background:rgb(244,244,244)"></div>
<div class="a" style="left:1602px;top:785px;width:15px;height:15px;background:rgb(222,222,222)"></div>
<div class="a" style="left:1617px;top:785px;width:15px;height:15px;background:rgb(226,226,226)"></div>
<div class="a" style="left:1632px;top:785px;width:15px;height:15px;background:rgb(214,214,214)"></div>
<div class="a" style="left:1647px;top:785px;width:15px;height:15px;background:rgb(214,214,214)"></div>
<div class="a" style="left:1662px;top:785px;width:15px;height:15px;background:rgb(214,214,214)"></div>
<div class="a" style="left:1677px;top:785px;width:15px;height:15px;background:rgb(218,218,218)"></div>
<div class="a" style="left:1692px;top:785px;width:15px;height:15px;background:rgb(218,218,218)"></div>
<div class="a" style="left:1707px;top:785px;width:15px;height:15px;background:rgb(214,214,214)"></div>
<div class="a" style="left:1722px;top:785px;width:15px;height:15px;background:rgb(226,226,226)"></div>
<div class="a" style="left:1737px;top:785px;width:16px;height:15px;background:rgb(236,236,236)"></div>
<div class="a" style="left:1602px;top:825px;width:15px;height:15px;background:rgb(226,226,226)"></div>
<div class="a" style="left:1617px;top:825px;width:15px;height:15px;background:rgb(226,226,226)"></div>
<div class="a" style="left:1632px;top:825px;width:15px;height:15px;background:rgb(226,226,226)"></div>
<div class="a" style="left:1647px;top:825px;width:15px;height:15px;background:rgb(214,214,214)"></div>
<div class="a" style="left:1662px;top:825px;width:15px;height:15px;background:rgb(218,218,218)"></div>
<div class="a" style="left:1677px;top:825px;width:15px;height:15px;background:rgb(222,222,222)"></div>
<div class="a" style="left:1692px;top:825px;width:15px;height:15px;background:rgb(222,222,222)"></div>
<div class="a" style="left:1707px;top:825px;width:15px;height:15px;background:rgb(214,214,214)"></div>
<div class="a" style="left:1722px;top:825px;width:15px;height:15px;background:rgb(222,222,222)"></div>
<div class="a" style="left:1737px;top:825px;width:16px;height:15px;background:rgb(236,236,236)"></div>
<div class="a" style="left:1602px;top:856px;width:15px;height:14px;background:rgb(222,222,222)"></div>
<div class="a" style="left:1602px;top:870px;width:15px;height:14px;background:rgb(238,238,238)"></div>
<div class="a" style="left:1617px;top:856px;width:15px;height:14px;background:rgb(214,214,214)"></div>
<div class="a" style="left:1617px;top:870px;width:15px;height:14px;background:rgb(230,230,230)"></div>
<div class="a" style="left:1632px;top:856px;width:15px;height:14px;background:rgb(226,226,226)"></div>
<div class="a" style="left:1632px;top:870px;width:15px;height:14px;background:rgb(242,242,242)"></div>
<div class="a" style="left:1647px;top:856px;width:15px;height:14px;background:rgb(214,214,214)"></div>
<div class="a" style="left:1647px;top:870px;width:15px;height:14px;background:rgb(230,230,230)"></div>
<div class="a" style="left:1662px;top:856px;width:15px;height:14px;background:rgb(218,218,218)"></div>
<div class="a" style="left:1662px;top:870px;width:15px;height:14px;background:rgb(234,234,234)"></div>
<div class="a" style="left:1677px;top:856px;width:15px;height:14px;background:rgb(218,218,218)"></div>
<div class="a" style="left:1677px;top:870px;width:15px;height:14px;background:rgb(234,234,234)"></div>
<div class="a" style="left:1692px;top:856px;width:15px;height:14px;background:rgb(214,214,214)"></div>
<div class="a" style="left:1692px;top:870px;width:15px;height:14px;background:rgb(230,230,230)"></div>
<div class="a" style="left:1707px;top:856px;width:15px;height:14px;background:rgb(214,214,214)"></div>
<div class="a" style="left:1707px;top:870px;width:15px;height:14px;background:rgb(230,230,230)"></div>
<div class="a" style="left:1722px;top:856px;width:15px;height:14px;background:rgb(214,214,214)"></div>
<div class="a" style="left:1722px;top:870px;width:15px;height:14px;background:rgb(230,230,230)"></div>
<div class="a" style="left:1737px;top:856px;width:16px;height:14px;background:rgb(236,236,236)"></div>
<div class="a" style="left:1737px;top:870px;width:16px;height:14px;background:rgb(244,244,244)"></div>
<div class="a" style="left:1602px;top:905px;width:15px;height:15px;background:rgb(226,226,226)"></div>
<div class="a" style="left:1617px;top:905px;width:15px;height:15px;background:rgb(226,226,226)"></div>
<div class="a" style="left:1632px;top:905px;width:15px;height:15px;background:rgb(218,218,218)"></div>
<div class="a" style="left:1647px;top:905px;width:15px;height:15px;background:rgb(218,218,218)"></div>
<div class="a" style="left:1662px;top:905px;width:15px;height:15px;background:rgb(226,226,226)"></div>
<div class="a" style="left:1677px;top:905px;width:15px;height:15px;background:rgb(218,218,218)"></div>
<div class="a" style="left:1692px;top:905px;width:15px;height:15px;background:rgb(218,218,218)"></div>
<div class="a" style="left:1707px;top:905px;width:15px;height:15px;background:rgb(226,226,226)"></div>
<div class="a" style="left:1722px;top:905px;width:15px;height:15px;background:rgb(226,226,226)"></div>
<div class="a" style="left:1737px;top:905px;width:16px;height:15px;background:rgb(236,236,236)"></div>
<div class="a" style="left:1602px;top:945px;width:15px;height:15px;background:rgb(214,214,214)"></div>
<div class="a" style="left:1617px;top:945px;width:15px;height:15px;background:rgb(226,226,226)"></div>
<div class="a" style="left:1632px;top:945px;width:15px;height:15px;background:rgb(226,226,226)"></div>
<div class="a" style="left:1647px;top:945px;width:15px;height:15px;background:rgb(218,218,218)"></div>
<div class="a" style="left:1662px;top:945px;width:15px;height:15px;background:rgb(214,214,214)"></div>
<div class="a" style="left:1677px;top:945px;width:15px;height:15px;background:rgb(222,222,222)"></div>
<div class="a" style="left:1692px;top:945px;width:15px;height:15px;background:rgb(222,222,222)"></div>
<div class="a" style="left:1707px;top:945px;width:15px;height:15px;background:rgb(214,214,214)"></div>
<div class="a" style="left:1722px;top:945px;width:15px;height:15px;background:rgb(218,218,218)"></div>
<div class="a" style="left:1737px;top:945px;width:16px;height:15px;background:rgb(236,236,236)"></div>
<div class="a" style="left:430px;top:878px;width:944px;height:75px;background:#fafafa"></div>
<div class="a" style="left:430px;top:888px;width:944px;height:14px;background:#e4e4e4"></div>
<div class="a" style="left:430px;top:902px;width:15px;height:15px;background:rgb(222,222,222)"></div>
<div class="a" style="left:445px;top:902px;width:15px;height:15px;background:rgb(192,192,192)"></div>
<div class="a" style="left:460px;top:902px;width:15px;height:15px;background:rgb(204,204,204)"></div>
<div class="a" style="left:475px;top:902px;width:15px;height:15px;background:rgb(204,204,204)"></div>
<div class="a" style="left:490px;top:902px;width:15px;height:15px;background:rgb(192,192,192)"></div>
<div class="a" style="left:505px;top:902px;width:15px;height:15px;background:rgb(188,188,188)"></div>
<div class="a" style="left:520px;top:902px;width:15px;height:15px;background:rgb(200,200,200)"></div>
<div class="a" style="left:535px;top:902px;width:15px;height:15px;background:rgb(196,196,196)"></div>
<div class="a" style="left:550px;top:902px;width:15px;height:15px;background:rgb(188,188,188)"></div>
<div class="a" style="left:565px;top:902px;width:15px;height:15px;background:rgb(228,228,228)"></div>
<div class="a" style="left:580px;top:902px;width:15px;height:15px;background:rgb(228,228,228)"></div>
<div class="a" style="left:595px;top:902px;width:15px;height:15px;background:rgb(236,236,236)"></div>
<div class="a" style="left:610px;top:902px;width:15px;height:15px;background:rgb(200,200,200)"></div>
<div class="a" style="left:625px;top:902px;width:15px;height:15px;background:rgb(196,196,196)"></div>
<div class="a" style="left:640px;top:902px;width:15px;height:15px;background:rgb(200,200,200)"></div>
<div class="a" style="left:655px;top:902px;width:15px;height:15px;background:rgb(226,226,226)"></div>
<div class="a" style="left:670px;top:902px;width:15px;height:15px;background:rgb(240,240,240)"></div>
<div class="a" style="left:685px;top:902px;width:15px;height:15px;background:rgb(240,240,240)"></div>
<div class="a" style="left:700px;top:902px;width:15px;height:15px;background:rgb(228,228,228)"></div>
<div class="a" style="left:715px;top:902px;width:15px;height:15px;background:rgb(190,190,190)"></div>
<div class="a" style="left:730px;top:902px;width:15px;height:15px;background:rgb(190,190,190)"></div>
<div class="a" style="left:745px;top:902px;width:15px;height:15px;background:rgb(186,186,186)"></div>
<div class="a" style="left:760px;top:902px;width:15px;height:15px;background:rgb(190,190,190)"></div>
<div class="a" style="left:1060px;top:902px;width:15px;height:15px;background:rgb(196,196,196)"></div>
<div class="a" style="left:1075px;top:902px;width:15px;height:15px;background:rgb(188,188,188)"></div>
<div class="a" style="left:1090px;top:902px;width:15px;height:15px;background:rgb(196,196,196)"></div>
<div class="a" style="left:1105px;top:902px;width:15px;height:15px;background:rgb(192,192,192)"></div>
<div class="a" style="left:1120px;top:902px;width:15px;height:15px;background:rgb(192,192,192)"></div>
<div class="a" style="left:1135px;top:902px;width:15px;height:15px;background:rgb(200,200,200)"></div>
<div class="a" style="left:1150px;top:902px;width:15px;height:15px;background:rgb(196,196,196)"></div>
<div class="a" style="left:1165px;top:902px;width:15px;height:15px;background:rgb(196,196,196)"></div>
<div class="a" style="left:1180px;top:902px;width:15px;height:15px;background:rgb(188,188,188)"></div>
<div class="a" style="left:1195px;top:902px;width:15px;height:15px;background:rgb(188,188,188)"></div>
<div class="a" style="left:1210px;top:902px;width:15px;height:15px;background:rgb(196,196,196)"></div>
<div class="a" style="left:1225px;top:902px;width:15px;height:15px;background:rgb(196,196,196)"></div>
<div class="a" style="left:1240px;top:902px;width:15px;height:15px;background:rgb(196,196,196)"></div>
<div class="a" style="left:1255px;top:902px;width:15px;height:15px;background:rgb(196,196,196)"></div>
<div class="a" style="left:1270px;top:902px;width:15px;height:15px;background:rgb(204,204,204)"></div>
<div class="a" style="left:1285px;top:902px;width:15px;height:15px;background:rgb(204,204,204)"></div>
<div class="a" style="left:1300px;top:902px;width:15px;height:15px;background:rgb(196,196,196)"></div>
<div class="a" style="left:1315px;top:902px;width:15px;height:15px;background:rgb(192,192,192)"></div>
<div class="a" style="left:1330px;top:902px;width:15px;height:15px;background:rgb(230,230,230)"></div>
<div class="a" style="left:445px;top:932px;width:15px;height:16px;background:rgb(236,236,236)"></div>
<div class="a" style="left:460px;top:932px;width:15px;height:16px;background:rgb(238,238,238)"></div>
<div class="a" style="left:475px;top:932px;width:15px;height:16px;background:rgb(236,236,236)"></div>
<div class="a" style="left:490px;top:932px;width:15px;height:16px;background:rgb(240,240,240)"></div>
<div class="a" style="left:505px;top:932px;width:15px;height:16px;background:rgb(240,240,240)"></div>
<div class="a" style="left:520px;top:932px;width:15px;height:16px;background:rgb(236,236,236)"></div>
<div class="a" style="left:535px;top:932px;width:15px;height:16px;background:rgb(240,240,240)"></div>
<div class="a" style="left:550px;top:932px;width:15px;height:16px;background:rgb(240,240,240)"></div>
<div class="a" style="left:610px;top:932px;width:15px;height:16px;background:rgb(238,238,238)"></div>
<div class="a" style="left:625px;top:932px;width:15px;height:16px;background:rgb(238,238,238)"></div>
<div class="a" style="left:640px;top:932px;width:15px;height:16px;background:rgb(240,240,240)"></div>
<div class="a" style="left:715px;top:932px;width:15px;height:16px;background:rgb(232,232,232)"></div>
<div class="a" style="left:730px;top:932px;width:15px;height:16px;background:rgb(236,236,236)"></div>
<div class="a" style="left:745px;top:932px;width:15px;height:16px;background:rgb(236,236,236)"></div>
<div class="a" style="left:760px;top:932px;width:15px;height:16px;background:rgb(232,232,232)"></div>
<div class="a" style="left:1060px;top:932px;width:15px;height:16px;background:rgb(240,240,240)"></div>
<div class="a" style="left:1075px;top:932px;width:15px;height:16px;background:rgb(240,240,240)"></div>
<div class="a" style="left:1090px;top:932px;width:15px;height:16px;background:rgb(240,240,240)"></div>
<div class="a" style="left:1105px;top:932px;width:15px;height:16px;background:rgb(238,238,238)"></div>
<div class="a" style="left:1120px;top:932px;width:15px;height:16px;background:rgb(234,234,234)"></div>
<div class="a" style="left:1135px;top:932px;width:15px;height:16px;background:rgb(238,238,238)"></div>
<div class="a" style="left:1150px;top:932px;width:15px;height:16px;background:rgb(238,238,238)"></div>
<div class="a" style="left:1165px;top:932px;width:15px;height:16px;background:rgb(238,238,238)"></div>
<div class="a" style="left:1180px;top:932px;width:15px;height:16px;background:rgb(238,238,238)"></div>
<div class="a" style="left:1195px;top:932px;width:15px;height:16px;background:rgb(240,240,240)"></div>
<div class="a" style="left:1210px;top:932px;width:15px;height:16px;background:rgb(238,238,238)"></div>
<div class="a" style="left:1225px;top:932px;width:15px;height:16px;background:rgb(234,234,234)"></div>
<div class="a" style="left:1240px;top:932px;width:15px;height:16px;background:rgb(238,238,238)"></div>
<div class="a" style="left:1255px;top:932px;width:15px;height:16px;background:rgb(238,238,238)"></div>
<div class="a" style="left:1270px;top:932px;width:15px;height:16px;background:rgb(240,240,240)"></div>
<div class="a" style="left:1285px;top:932px;width:15px;height:16px;background:rgb(234,234,234)"></div>
<div class="a" style="left:1300px;top:932px;width:15px;height:16px;background:rgb(234,234,234)"></div>
<div class="a" style="left:1315px;top:932px;width:15px;height:16px;background:rgb(238,238,238)"></div>
<div class="a" style="left:445px;top:948px;width:15px;height:5px;background:rgb(150,150,150)"></div>
<div class="a" style="left:460px;top:948px;width:15px;height:5px;background:rgb(170,170,170)"></div>
<div class="a" style="left:475px;top:948px;width:15px;height:5px;background:rgb(160,160,160)"></div>
<div class="a" style="left:490px;top:948px;width:15px;height:5px;background:rgb(160,160,160)"></div>
<div class="a" style="left:505px;top:948px;width:15px;height:5px;background:rgb(150,150,150)"></div>
<div class="a" style="left:520px;top:948px;width:15px;height:5px;background:rgb(170,170,170)"></div>
<div class="a" style="left:535px;top:948px;width:15px;height:5px;background:rgb(160,160,160)"></div>
<div class="a" style="left:550px;top:948px;width:15px;height:5px;background:rgb(160,160,160)"></div>
<div class="a" style="left:565px;top:948px;width:15px;height:5px;background:rgb(160,160,160)"></div>
<div class="a" style="left:607px;top:948px;width:15px;height:5px;background:rgb(160,160,160)"></div>
<div class="a" style="left:622px;top:948px;width:15px;height:5px;background:rgb(170,170,170)"></div>
<div class="a" style="left:637px;top:948px;width:15px;height:5px;background:rgb(160,160,160)"></div>
<div class="a" style="left:652px;top:948px;width:15px;height:5px;background:rgb(160,160,160)"></div>
<div class="a" style="left:715px;top:948px;width:15px;height:5px;background:rgb(140,140,140)"></div>
<div class="a" style="left:730px;top:948px;width:15px;height:5px;background:rgb(120,120,120)"></div>
<div class="a" style="left:745px;top:948px;width:15px;height:5px;background:rgb(120,120,120)"></div>
<div class="a" style="left:760px;top:948px;width:15px;height:5px;background:rgb(120,120,120)"></div>
<div class="a" style="left:1060px;top:948px;width:15px;height:5px;background:rgb(160,160,160)"></div>
<div class="a" style="left:1075px;top:948px;width:15px;height:5px;background:rgb(160,160,160)"></div>
<div class="a" style="left:1090px;top:948px;width:15px;height:5px;background:rgb(172,172,172)"></div>
<div class="a" style="left:1105px;top:948px;width:15px;height:5px;background:rgb(160,160,160)"></div>
<div class="a" style="left:1120px;top:948px;width:15px;height:5px;background:rgb(172,172,172)"></div>
<div class="a" style="left:1135px;top:948px;width:15px;height:5px;background:rgb(160,160,160)"></div>
<div class="a" style="left:1150px;top:948px;width:15px;height:5px;background:rgb(160,160,160)"></div>
<div class="a" style="left:1165px;top:948px;width:15px;height:5px;background:rgb(150,150,150)"></div>
<div class="a" style="left:1180px;top:948px;width:15px;height:5px;background:rgb(172,172,172)"></div>
<div class="a" style="left:1195px;top:948px;width:15px;height:5px;background:rgb(172,172,172)"></div>
<div class="a" style="left:1210px;top:948px;width:15px;height:5px;background:rgb(160,160,160)"></div>
<div class="a" style="left:1225px;top:948px;width:15px;height:5px;background:rgb(160,160,160)"></div>
<div class="a" style="left:1240px;top:948px;width:15px;height:5px;background:rgb(150,150,150)"></div>
<div class="a" style="left:1255px;top:948px;width:15px;height:5px;background:rgb(160,160,160)"></div>
<div class="a" style="left:1270px;top:948px;width:15px;height:5px;background:rgb(150,150,150)"></div>
<div class="a" style="left:1285px;top:948px;width:15px;height:5px;background:rgb(150,150,150)"></div>
<div class="a" style="left:1300px;top:948px;width:15px;height:5px;background:rgb(160,160,160)"></div>
<div class="a" style="left:1315px;top:948px;width:15px;height:5px;background:rgb(172,172,172)"></div>
<div class="a" style="left:1330px;top:948px;width:15px;height:5px;background:rgb(172,172,172)"></div>
<div class="a" style="left:430px;top:948px;width:944px;height:5px;background:rgba(250,250,250,.45)"></div>
<div class="a" style="left:1838px;top:531px;width:17px;height:430px;background:#fbfbfb"></div>
<div class="a" style="left:1840px;top:547px;width:13px;height:138px;background:#c1c1c1"></div>
<svg class="a" style="left:1841px;top:536px" width="10" height="6" viewBox="0 0 10 6"><path d="M0.500 5.500 L5 1 L9.500 5.500 Z" fill="#a4a4a4"/></svg>
<div class="a" style="left:1903px;top:55px;width:17px;height:898px;background:#f6f7f9"></div>
<div class="a" style="left:1905px;top:72px;width:13px;height:698px;background:#c3c3c3"></div>
<svg class="a" style="left:1906px;top:61px" width="10" height="6" viewBox="0 0 10 6"><path d="M0.500 5.500 L5 1 L9.500 5.500 Z" fill="#a4a4a4"/></svg>
<svg class="a" style="left:1906px;top:941px" width="10" height="6" viewBox="0 0 10 6"><path d="M0 0.500 L5 5.500 L10 0.500 Z" fill="#4a4a4a"/></svg>
<div id="ovl"></div></div>
<div id="modal"><div class="a" style="left:-410px;top:-77px;width:1920px;height:953px">
<div class="a" style="left:410px;top:117px;width:1100px;height:692px;background:#fafafa;border-top:1px solid #d8d8d8;border-bottom:1px solid #d8d8d8"></div>
<div class="txt" style="left:426px;top:87px;font-size:16px;line-height:20px;color:#2b3950">Edit Inspection</div>
<svg class="a" style="left:1481.500px;top:90.700px" width="10" height="10" viewBox="0 0 10 10"><path d="M1.400 1.400 L8.600 8.600 M8.600 1.400 L1.400 8.600" stroke="#222" stroke-width="1.200" stroke-linecap="round"/></svg>
<div class="a" style="left:426px;top:123px;width:1056px;height:64px;background:#f5f6f8;border:1px solid #f0f1f3;border-radius:5px"></div>
<div class="txt" style="left:435px;top:129.8px;font-size:12px;line-height:15px;color:#6f7b87">Plant:</div>
<div class="txt" style="left:435px;top:147.7px;font-size:12px;line-height:15px;color:#6f7b87">Ticket:</div>
<div class="txt" style="left:435px;top:165.7px;font-size:12px;line-height:15px;color:#6f7b87">Address:</div>
<div class="txt" style="left:969px;top:129.8px;font-size:12px;line-height:15px;color:#6f7b87">Driver:</div>
<div class="txt" style="left:969px;top:147.7px;font-size:12px;line-height:15px;color:#6f7b87">Project:</div>
<div class="a" style="left:470px;top:129px;width:15px;height:13px;background:rgb(218,218,220)"></div><div class="a" style="left:485px;top:129px;width:15px;height:13px;background:rgb(210,210,212)"></div><div class="a" style="left:500px;top:129px;width:15px;height:13px;background:rgb(214,214,216)"></div><div class="a" style="left:515px;top:129px;width:15px;height:13px;background:rgb(222,222,224)"></div><div class="a" style="left:530px;top:129px;width:15px;height:13px;background:rgb(214,214,216)"></div><div class="a" style="left:545px;top:129px;width:15px;height:13px;background:rgb(226,226,228)"></div><div class="a" style="left:560px;top:129px;width:15px;height:13px;background:rgb(226,226,228)"></div><div class="a" style="left:575px;top:129px;width:15px;height:13px;background:rgb(226,226,228)"></div><div class="a" style="left:590px;top:129px;width:11px;height:13px;background:rgb(236,236,238)"></div>
<div class="a" style="left:468.500px;top:132px;width:1.500px;height:8px;background:#e8a06a;opacity:.45"></div>
<div class="a" style="left:473px;top:144px;width:15px;height:15px;background:rgb(214,214,216)"></div><div class="a" style="left:488px;top:144px;width:15px;height:15px;background:rgb(214,214,216)"></div><div class="a" style="left:503px;top:144px;width:15px;height:15px;background:rgb(236,236,238)"></div>
<div class="a" style="left:487px;top:162px;width:15px;height:15px;background:rgb(218,218,220)"></div><div class="a" style="left:502px;top:162px;width:15px;height:15px;background:rgb(210,210,212)"></div><div class="a" style="left:517px;top:162px;width:15px;height:15px;background:rgb(210,210,212)"></div><div class="a" style="left:532px;top:162px;width:15px;height:15px;background:rgb(218,218,220)"></div><div class="a" style="left:547px;top:162px;width:15px;height:15px;background:rgb(222,222,224)"></div><div class="a" style="left:562px;top:162px;width:15px;height:15px;background:rgb(210,210,212)"></div><div class="a" style="left:577px;top:162px;width:15px;height:15px;background:rgb(226,226,228)"></div><div class="a" style="left:592px;top:162px;width:15px;height:15px;background:rgb(230,230,232)"></div><div class="a" style="left:607px;top:162px;width:15px;height:15px;background:rgb(210,210,212)"></div><div class="a" style="left:622px;top:162px;width:15px;height:15px;background:rgb(214,214,216)"></div><div class="a" style="left:637px;top:162px;width:15px;height:15px;background:rgb(210,210,212)"></div><div class="a" style="left:652px;top:162px;width:15px;height:15px;background:rgb(214,214,216)"></div><div class="a" style="left:667px;top:162px;width:15px;height:15px;background:rgb(226,226,228)"></div><div class="a" style="left:682px;top:162px;width:15px;height:15px;background:rgb(222,222,224)"></div><div class="a" style="left:697px;top:162px;width:15px;height:15px;background:rgb(210,210,212)"></div><div class="a" style="left:712px;top:162px;width:15px;height:15px;background:rgb(218,218,220)"></div><div class="a" style="left:727px;top:162px;width:15px;height:15px;background:rgb(218,218,220)"></div><div class="a" style="left:742px;top:162px;width:15px;height:15px;background:rgb(230,230,232)"></div><div class="a" style="left:757px;top:162px;width:15px;height:15px;background:rgb(226,226,228)"></div><div class="a" style="left:772px;top:162px;width:15px;height:15px;background:rgb(210,210,212)"></div><div class="a" style="left:787px;top:162px;width:15px;height:15px;background:rgb(210,210,212)"></div><div class="a" style="left:802px;top:162px;width:15px;height:15px;background:rgb(226,226,228)"></div><div class="a" style="left:817px;top:162px;width:15px;height:15px;background:rgb(226,226,228)"></div><div class="a" style="left:832px;top:162px;width:15px;height:15px;background:rgb(230,230,232)"></div>
<div class="a" style="left:485px;top:166px;width:2px;height:10px;background:#8a2c4a;opacity:.7"></div>
<div class="a" style="left:1005px;top:129px;width:15px;height:13px;background:rgb(218,218,220)"></div><div class="a" style="left:1020px;top:129px;width:15px;height:13px;background:rgb(222,222,224)"></div><div class="a" style="left:1035px;top:129px;width:15px;height:13px;background:rgb(214,214,216)"></div><div class="a" style="left:1050px;top:129px;width:15px;height:13px;background:rgb(230,230,232)"></div><div class="a" style="left:1065px;top:129px;width:15px;height:13px;background:rgb(226,226,228)"></div><div class="a" style="left:1080px;top:129px;width:15px;height:13px;background:rgb(226,226,228)"></div><div class="a" style="left:1095px;top:129px;width:15px;height:13px;background:rgb(218,218,220)"></div><div class="a" style="left:1110px;top:129px;width:15px;height:13px;background:rgb(214,214,216)"></div><div class="a" style="left:1125px;top:129px;width:15px;height:13px;background:rgb(214,214,216)"></div><div class="a" style="left:1140px;top:129px;width:15px;height:13px;background:rgb(214,214,216)"></div><div class="a" style="left:1155px;top:129px;width:15px;height:13px;background:rgb(226,226,228)"></div><div class="a" style="left:1170px;top:129px;width:15px;height:13px;background:rgb(210,210,212)"></div>
<div class="a" style="left:1013px;top:147px;width:15px;height:14px;background:rgb(210,210,212)"></div><div class="a" style="left:1028px;top:147px;width:15px;height:14px;background:rgb(222,222,224)"></div><div class="a" style="left:1043px;top:147px;width:15px;height:14px;background:rgb(230,230,232)"></div><div class="a" style="left:1058px;top:147px;width:15px;height:14px;background:rgb(222,222,224)"></div><div class="a" style="left:1073px;top:147px;width:15px;height:14px;background:rgb(230,230,232)"></div><div class="a" style="left:1088px;top:147px;width:15px;height:14px;background:rgb(230,230,232)"></div><div class="a" style="left:1103px;top:147px;width:15px;height:14px;background:rgb(230,230,232)"></div><div class="a" style="left:1118px;top:147px;width:15px;height:14px;background:rgb(210,210,212)"></div><div class="a" style="left:1133px;top:147px;width:15px;height:14px;background:rgb(214,214,216)"></div><div class="a" style="left:1148px;top:147px;width:15px;height:14px;background:rgb(226,226,228)"></div><div class="a" style="left:1163px;top:147px;width:15px;height:14px;background:rgb(218,218,220)"></div><div class="a" style="left:1178px;top:147px;width:15px;height:14px;background:rgb(230,230,232)"></div><div class="a" style="left:1193px;top:147px;width:15px;height:14px;background:rgb(214,214,216)"></div><div class="a" style="left:1208px;top:147px;width:15px;height:14px;background:rgb(218,218,220)"></div><div class="a" style="left:1223px;top:147px;width:15px;height:14px;background:rgb(214,214,216)"></div><div class="a" style="left:1238px;top:147px;width:15px;height:14px;background:rgb(222,222,224)"></div><div class="a" style="left:1253px;top:147px;width:15px;height:14px;background:rgb(226,226,228)"></div><div class="a" style="left:1268px;top:147px;width:15px;height:14px;background:rgb(218,218,220)"></div><div class="a" style="left:1283px;top:147px;width:15px;height:14px;background:rgb(226,226,228)"></div><div class="a" style="left:1298px;top:147px;width:15px;height:14px;background:rgb(210,210,212)"></div><div class="a" style="left:1313px;top:147px;width:15px;height:14px;background:rgb(214,214,216)"></div><div class="a" style="left:1328px;top:147px;width:15px;height:14px;background:rgb(210,210,212)"></div><div class="a" style="left:1343px;top:147px;width:15px;height:14px;background:rgb(218,218,220)"></div><div class="a" style="left:1358px;top:147px;width:15px;height:14px;background:rgb(214,214,216)"></div><div class="a" style="left:1373px;top:147px;width:12px;height:14px;background:rgb(236,236,238)"></div>
<div class="lbl" style="left:426px;top:200px;line-height:14px">Product</div>
<div class="inp dis" style="left:426px;top:216px;width:694px;height:33px"></div>
<svg class="a" style="left:1099.4px;top:229.628px" width="9.2" height="5.744" viewBox="-1 -1 9.2 5.744"><path d="M0 0 L3.6 3.244 L7.2 0" fill="none" stroke="#666" stroke-width="1.4" stroke-linecap="round" stroke-linejoin="round"/></svg>
<div class="a" style="left:436px;top:222px;width:15px;height:14px;background:rgb(234,234,236)"></div><div class="a" style="left:451px;top:222px;width:15px;height:14px;background:rgb(228,228,230)"></div><div class="a" style="left:466px;top:222px;width:15px;height:14px;background:rgb(224,224,226)"></div><div class="a" style="left:481px;top:222px;width:15px;height:14px;background:rgb(236,236,238)"></div><div class="a" style="left:496px;top:222px;width:15px;height:14px;background:rgb(228,228,230)"></div><div class="a" style="left:511px;top:222px;width:15px;height:14px;background:rgb(228,228,230)"></div><div class="a" style="left:526px;top:222px;width:15px;height:14px;background:rgb(232,232,234)"></div><div class="a" style="left:541px;top:222px;width:15px;height:14px;background:rgb(234,234,236)"></div><div class="a" style="left:556px;top:222px;width:15px;height:14px;background:rgb(224,224,226)"></div><div class="a" style="left:571px;top:222px;width:15px;height:14px;background:rgb(236,236,238)"></div><div class="a" style="left:586px;top:222px;width:15px;height:14px;background:rgb(236,236,238)"></div><div class="a" style="left:601px;top:222px;width:15px;height:14px;background:rgb(228,228,230)"></div><div class="a" style="left:616px;top:222px;width:15px;height:14px;background:rgb(236,236,238)"></div><div class="a" style="left:631px;top:222px;width:15px;height:14px;background:rgb(224,224,226)"></div><div class="a" style="left:646px;top:222px;width:15px;height:14px;background:rgb(232,232,234)"></div><div class="a" style="left:661px;top:222px;width:15px;height:14px;background:rgb(224,224,226)"></div><div class="a" style="left:676px;top:222px;width:15px;height:14px;background:rgb(234,234,236)"></div><div class="a" style="left:691px;top:222px;width:15px;height:14px;background:rgb(236,236,238)"></div>
<div class="a" style="left:436px;top:236px;width:15px;height:6px;background:rgb(243,243,245)"></div><div class="a" style="left:451px;top:236px;width:15px;height:6px;background:rgb(240,240,242)"></div><div class="a" style="left:466px;top:236px;width:15px;height:6px;background:rgb(243,243,245)"></div><div class="a" style="left:481px;top:236px;width:15px;height:6px;background:rgb(245,245,247)"></div><div class="a" style="left:496px;top:236px;width:15px;height:6px;background:rgb(240,240,242)"></div><div class="a" style="left:511px;top:236px;width:15px;height:6px;background:rgb(240,240,242)"></div><div class="a" style="left:526px;top:236px;width:15px;height:6px;background:rgb(245,245,247)"></div><div class="a" style="left:541px;top:236px;width:15px;height:6px;background:rgb(240,240,242)"></div><div class="a" style="left:556px;top:236px;width:15px;height:6px;background:rgb(243,243,245)"></div><div class="a" style="left:571px;top:236px;width:15px;height:6px;background:rgb(245,245,247)"></div><div class="a" style="left:586px;top:236px;width:15px;height:6px;background:rgb(240,240,242)"></div><div class="a" style="left:601px;top:236px;width:15px;height:6px;background:rgb(245,245,247)"></div><div class="a" style="left:616px;top:236px;width:15px;height:6px;background:rgb(240,240,242)"></div><div class="a" style="left:631px;top:236px;width:15px;height:6px;background:rgb(240,240,242)"></div><div class="a" style="left:646px;top:236px;width:15px;height:6px;background:rgb(240,240,242)"></div><div class="a" style="left:661px;top:236px;width:15px;height:6px;background:rgb(243,243,245)"></div><div class="a" style="left:676px;top:236px;width:15px;height:6px;background:rgb(243,243,245)"></div><div class="a" style="left:691px;top:236px;width:15px;height:6px;background:rgb(240,240,242)"></div>
<div class="lbl" style="left:1150px;top:200px;line-height:14px">Status *</div>
<div class="inp" style="left:1150px;top:216px;width:332px;height:33px"></div>
<svg class="a" style="left:1461.4px;top:229.628px" width="9.2" height="5.744" viewBox="-1 -1 9.2 5.744"><path d="M0 0 L3.6 3.244 L7.2 0" fill="none" stroke="#1b2a44" stroke-width="1.4" stroke-linecap="round" stroke-linejoin="round"/></svg>
<div class="a" style="left:1158px;top:225px;width:15px;height:13px;background:rgb(228,228,230)"></div><div class="a" style="left:1173px;top:225px;width:15px;height:13px;background:rgb(232,232,234)"></div><div class="a" style="left:1188px;top:225px;width:15px;height:13px;background:rgb(218,218,220)"></div><div class="a" style="left:1203px;top:225px;width:15px;height:13px;background:rgb(228,228,230)"></div><div class="a" style="left:1218px;top:225px;width:15px;height:13px;background:rgb(228,228,230)"></div><div class="a" style="left:1233px;top:225px;width:15px;height:13px;background:rgb(222,222,224)"></div>
<div class="lbl" style="left:426px;top:260px;line-height:14px">Inspection Type *</div>
<div class="inp dis" style="left:426px;top:276px;width:332px;height:33px"></div>
<svg class="a" style="left:737.4px;top:289.628px" width="9.2" height="5.744" viewBox="-1 -1 9.2 5.744"><path d="M0 0 L3.6 3.244 L7.2 0" fill="none" stroke="#666" stroke-width="1.4" stroke-linecap="round" stroke-linejoin="round"/></svg>
<div class="a" style="left:435px;top:281px;width:15px;height:14px;background:rgb(224,224,226)"></div><div class="a" style="left:450px;top:281px;width:15px;height:14px;background:rgb(234,234,236)"></div><div class="a" style="left:465px;top:281px;width:15px;height:14px;background:rgb(236,236,238)"></div><div class="a" style="left:480px;top:281px;width:15px;height:14px;background:rgb(236,236,238)"></div><div class="a" style="left:495px;top:281px;width:15px;height:14px;background:rgb(232,232,234)"></div><div class="a" style="left:510px;top:281px;width:15px;height:14px;background:rgb(232,232,234)"></div><div class="a" style="left:525px;top:281px;width:15px;height:14px;background:rgb(228,228,230)"></div><div class="a" style="left:540px;top:281px;width:15px;height:14px;background:rgb(236,236,238)"></div><div class="a" style="left:555px;top:281px;width:15px;height:14px;background:rgb(234,234,236)"></div><div class="a" style="left:570px;top:281px;width:15px;height:14px;background:rgb(224,224,226)"></div><div class="a" style="left:585px;top:281px;width:15px;height:14px;background:rgb(234,234,236)"></div><div class="a" style="left:600px;top:281px;width:15px;height:14px;background:rgb(228,228,230)"></div>
<div class="a" style="left:435px;top:295px;width:15px;height:5px;background:rgb(245,245,247)"></div><div class="a" style="left:450px;top:295px;width:15px;height:5px;background:rgb(240,240,242)"></div><div class="a" style="left:465px;top:295px;width:15px;height:5px;background:rgb(243,243,245)"></div><div class="a" style="left:480px;top:295px;width:15px;height:5px;background:rgb(243,243,245)"></div><div class="a" style="left:495px;top:295px;width:15px;height:5px;background:rgb(245,245,247)"></div><div class="a" style="left:510px;top:295px;width:15px;height:5px;background:rgb(240,240,242)"></div><div class="a" style="left:525px;top:295px;width:15px;height:5px;background:rgb(240,240,242)"></div><div class="a" style="left:540px;top:295px;width:15px;height:5px;background:rgb(243,243,245)"></div><div class="a" style="left:555px;top:295px;width:15px;height:5px;background:rgb(243,243,245)"></div><div class="a" style="left:570px;top:295px;width:15px;height:5px;background:rgb(243,243,245)"></div><div class="a" style="left:585px;top:295px;width:15px;height:5px;background:rgb(245,245,247)"></div><div class="a" style="left:600px;top:295px;width:15px;height:5px;background:rgb(240,240,242)"></div>
<div class="lbl" style="left:788px;top:260px;line-height:14px">Laboratory *</div>
<div class="inp" style="left:788px;top:276px;width:332px;height:33px"></div>
<svg class="a" style="left:1099.4px;top:289.628px" width="9.2" height="5.744" viewBox="-1 -1 9.2 5.744"><path d="M0 0 L3.6 3.244 L7.2 0" fill="none" stroke="#1b2a44" stroke-width="1.4" stroke-linecap="round" stroke-linejoin="round"/></svg>
<div class="a" style="left:793px;top:282px;width:15px;height:13px;background:rgb(218,218,220)"></div><div class="a" style="left:808px;top:282px;width:15px;height:13px;background:rgb(232,232,234)"></div><div class="a" style="left:823px;top:282px;width:15px;height:13px;background:rgb(226,226,228)"></div><div class="a" style="left:838px;top:282px;width:15px;height:13px;background:rgb(232,232,234)"></div><div class="a" style="left:853px;top:282px;width:15px;height:13px;background:rgb(228,228,230)"></div><div class="a" style="left:868px;top:282px;width:15px;height:13px;background:rgb(218,218,220)"></div><div class="a" style="left:883px;top:282px;width:15px;height:13px;background:rgb(222,222,224)"></div><div class="a" style="left:898px;top:282px;width:15px;height:13px;background:rgb(232,232,234)"></div><div class="a" style="left:913px;top:282px;width:15px;height:13px;background:rgb(236,236,238)"></div>
<div class="lbl" style="left:1150px;top:260px;line-height:14px">Usage</div>
<div class="inp" style="left:1150px;top:276px;width:332px;height:33px"></div>
<svg class="a" style="left:1461.4px;top:289.628px" width="9.2" height="5.744" viewBox="-1 -1 9.2 5.744"><path d="M0 0 L3.6 3.244 L7.2 0" fill="none" stroke="#1b2a44" stroke-width="1.4" stroke-linecap="round" stroke-linejoin="round"/></svg>
<div class="lbl" style="left:426px;top:320px;line-height:14px">Created Type *</div>
<div class="inp" style="left:426px;top:336px;width:151px;height:33px"></div>
<svg class="a" style="left:556.4px;top:349.628px" width="9.2" height="5.744" viewBox="-1 -1 9.2 5.744"><path d="M0 0 L3.6 3.244 L7.2 0" fill="none" stroke="#1b2a44" stroke-width="1.4" stroke-linecap="round" stroke-linejoin="round"/></svg>
<div class="txt" style="left:436px;top:342.200px;font-size:14px;line-height:18px;color:#46555f;letter-spacing:.1px">Laboratory</div>
<div class="lbl" style="left:607px;top:320px;line-height:14px">Sampling</div>
<div class="inp dis" style="left:607px;top:336px;width:151px;height:33px"></div>
<div class="txt" style="left:617px;top:342.200px;font-size:14px;line-height:18px;color:#8d949c;letter-spacing:.55px">1/4/2023</div>
<svg class="a" style="left:717px;top:348px" width="10" height="10" viewBox="0 0 10 10"><path d="M1 1 L9 9 M9 1 L1 9" stroke="#aaa" stroke-width="1.100" stroke-linecap="round"/></svg>
<svg class="a" style="left:735.0px;top:344.8px" width="14" height="14" viewBox="0 0 24 24"><path fill="#555" d="M19 4h-1V2h-2v2H8V2H6v2H5c-1.1 0-2 .9-2 2v14c0 1.1.9 2 2 2h14c1.1 0 2-.9 2-2V6c0-1.1-.9-2-2-2zm0 16H5V10h14v10zm0-12H5V6h14v2zm-7 5h5v5h-5z"/></svg>
<div class="lbl" style="left:788px;top:320px;line-height:14px">Temperature</div>
<div class="inp" style="left:788px;top:336px;width:151px;height:32px"></div>
<div class="txt" style="left:798px;top:342.200px;font-size:14px;line-height:18px;color:#46555f;letter-spacing:.3px">30</div>
<div class="lbl" style="left:969px;top:320px;line-height:14px">Ambient Temperature</div>
<div class="inp" style="left:969px;top:336px;width:151px;height:32px"></div>
<div class="lbl" style="left:1150px;top:320px;line-height:14px">Slump</div>
<div class="inp" style="left:1150px;top:336px;width:151px;height:32px"></div>
<div class="txt" style="left:1160px;top:342.200px;font-size:14px;line-height:18px;color:#46555f;letter-spacing:.3px">16</div>
<div class="lbl" style="left:1331px;top:320px;line-height:14px">Air (%)</div>
<div class="inp" style="left:1331px;top:336px;width:151px;height:32px"></div>
<div class="lbl" style="left:426px;top:380px;line-height:14px">Exudation</div>
<div class="inp" style="left:426px;top:396px;width:332px;height:33px"></div>
<svg class="a" style="left:737.4px;top:409.628px" width="9.2" height="5.744" viewBox="-1 -1 9.2 5.744"><path d="M0 0 L3.6 3.244 L7.2 0" fill="none" stroke="#1b2a44" stroke-width="1.4" stroke-linecap="round" stroke-linejoin="round"/></svg>
<div class="lbl" style="left:788px;top:380px;line-height:14px">Segregation</div>
<div class="inp" style="left:788px;top:396px;width:151px;height:33px"></div>
<svg class="a" style="left:918.4px;top:409.628px" width="9.2" height="5.744" viewBox="-1 -1 9.2 5.744"><path d="M0 0 L3.6 3.244 L7.2 0" fill="none" stroke="#1b2a44" stroke-width="1.4" stroke-linecap="round" stroke-linejoin="round"/></svg>
<div class="lbl" style="left:969px;top:380px;line-height:14px">Density (Kg/M&#179;)</div>
<div class="inp" style="left:969px;top:396px;width:151px;height:32px"></div>
<div class="lbl" style="left:1150px;top:380px;line-height:14px">Collected At</div>
<div class="inp" style="left:1150px;top:396px;width:332px;height:33px"></div>
<svg class="a" style="left:1293.5px;top:405.0px" width="15" height="15" viewBox="0 0 24 24"><path fill="#222" d="M19 4h-1V2h-2v2H8V2H6v2H5c-1.1 0-2 .9-2 2v14c0 1.1.9 2 2 2h14c1.1 0 2-.9 2-2V6c0-1.1-.9-2-2-2zm0 16H5V10h14v10zm0-12H5V6h14v2zm-7 5h5v5h-5z"/></svg>
<div class="txt" style="left:1421px;top:403px;font-size:13px;line-height:18px;color:#666;letter-spacing:.3px">--:--</div>
<svg class="a" style="left:1455.5px;top:404.5px" width="15" height="15" viewBox="0 0 24 24"><path fill="#222" d="M11.99 2C6.47 2 2 6.48 2 12s4.47 10 9.99 10C17.52 22 22 17.52 22 12S17.520 2 11.99 2zM12 20c-4.42 0-8-3.58-8-8s3.58-8 8-8 8 3.58 8 8-3.58 8-8 8zm.5-13H11v6l5.250 3.150.75-1.230-4.500-2.670z"/></svg>
<div class="lbl" style="left:426px;top:440px;line-height:14px">Notes</div>
<div class="inp" style="left:426px;top:456px;width:513px;height:56px"></div>
<div class="txt" style="left:436px;top:463px;font-size:14px;line-height:18px;color:#414a54;letter-spacing:.35px">28416</div>
<div class="lbl" style="left:969px;top:440px;line-height:14px">Collection Notes</div>
<div class="inp" style="left:969px;top:456px;width:513px;height:56px"></div>
<svg class="a" style="left:926px;top:499px" width="10" height="10" viewBox="0 0 10 10"><path d="M9.500 1.500 L1.500 9.500 M9.500 5.500 L5.500 9.500" stroke="#555" stroke-width="1"/></svg>
<svg class="a" style="left:1469px;top:499px" width="10" height="10" viewBox="0 0 10 10"><path d="M9.500 1.500 L1.500 9.500 M9.500 5.500 L5.500 9.500" stroke="#555" stroke-width="1"/></svg>
<div class="txt" style="left:426px;top:519px;font-size:12px;line-height:14px;color:#555d66">Samples:</div>
<div class="txt" style="left:1282px;top:519px;width:200px;text-align:right;font-size:12px;line-height:14px;color:#3a4149;-webkit-text-stroke:.3px #3a4149">Format: Cylinder</div>
<div class="a" style="left:429px;top:542px;width:1050px;height:212px;box-shadow:0 0 0 4px #f0383c,0 4.600px 0 0 rgba(90,110,110,.55);border-radius:1px;background:#fafafa"></div>
<div class="a" style="left:429px;top:542px;width:1050px;height:1px;background:#aab2b2"></div>
<div class="a" style="left:429px;top:543px;width:1050px;height:26px;background:#f5f5f5"></div>
<div class="a" style="left:429px;top:569px;width:1050px;height:1px;background:#d9d9d9"></div>
<div class="a" style="left:614px;top:543px;width:1px;height:25px;background:#d9d9d9"></div>
<div class="a" style="left:777px;top:543px;width:1px;height:25px;background:#d9d9d9"></div>
<div class="a" style="left:1023px;top:543px;width:1px;height:25px;background:#d9d9d9"></div>
<div class="a" style="left:1186px;top:543px;width:1px;height:25px;background:#d9d9d9"></div>
<div class="a" style="left:1350px;top:543px;width:1px;height:25px;background:#d9d9d9"></div>
<div class="txt" style="left:460px;top:549px;width:160px;text-align:center;font-size:12px;line-height:14px;color:#333a42;-webkit-text-stroke:.35px #333a42">Days for the Test</div>
<div class="txt" style="left:623px;top:549px;width:160px;text-align:center;font-size:12px;line-height:14px;color:#333a42;-webkit-text-stroke:.35px #333a42">Test Date</div>
<div class="txt" style="left:828px;top:549px;width:160px;text-align:center;font-size:12px;line-height:14px;color:#333a42;-webkit-text-stroke:.35px #333a42">Disruption</div>
<div class="txt" style="left:1032px;top:549px;width:160px;text-align:center;font-size:12px;line-height:14px;color:#333a42;-webkit-text-stroke:.35px #333a42">Invalid</div>
<div class="txt" style="left:1196px;top:549px;width:160px;text-align:center;font-size:12px;line-height:14px;color:#333a42;-webkit-text-stroke:.35px #333a42">To Third</div>
<div class="inp" style="left:466px;top:576px;width:134px;height:31.5px"></div>
<div class="txt" style="left:476px;top:583px;font-size:14px;line-height:18px;color:#414a54;letter-spacing:.3px">7</div>
<div class="txt" style="left:636px;top:585px;width:120px;text-align:center;font-size:11.500px;line-height:14px;color:#2c333b;letter-spacing:.3px;-webkit-text-stroke:.15px #2c333b">08/04/2023</div>
<div class="inp" style="left:793px;top:577px;width:216px;height:30px"></div>
<div class="txt" style="left:801px;top:582px;font-size:14px;line-height:18px;color:#46555f;letter-spacing:.2px">8/4/2023</div>
<svg class="a" style="left:884.4000000000001px;top:583.9000000000001px" width="14.6" height="14.6" viewBox="0 0 24 24"><path fill="#333" d="M19 4h-1V2h-2v2H8V2H6v2H5c-1.1 0-2 .9-2 2v14c0 1.1.9 2 2 2h14c1.1 0 2-.9 2-2V6c0-1.1-.9-2-2-2zm0 16H5V10h14v10zm0-12H5V6h14v2zm-7 5h5v5h-5z"/></svg>
<div class="txt" style="left:936px;top:582.5px;font-size:14px;line-height:18px;color:#555d66;letter-spacing:.2px">13:59</div>
<svg class="a" style="left:984.0px;top:584.5px" width="14" height="14" viewBox="0 0 24 24"><path fill="#222" d="M11.99 2C6.47 2 2 6.48 2 12s4.47 10 9.99 10C17.52 22 22 17.52 22 12S17.520 2 11.99 2zM12 20c-4.42 0-8-3.58-8-8s3.58-8 8-8 8 3.58 8 8-3.58 8-8 8zm.5-13H11v6l5.250 3.150.75-1.230-4.500-2.670z"/></svg>
<div class="a" style="left:1039px;top:586.5px;width:16px;height:16px;border:1.300px solid #55606b;border-radius:2.500px;background:#fff"></div>
<div class="txt" style="left:1063px;top:586.7px;font-size:11px;line-height:14px;color:#5a626b;-webkit-text-stroke:.25px #5a626b">Invalid</div>
<div class="a" style="left:1202px;top:586.5px;width:16px;height:16px;border:1.300px solid #55606b;border-radius:2.500px;background:#fff"></div>
<div class="txt" style="left:1227px;top:586.7px;font-size:11px;line-height:14px;color:#5a626b;-webkit-text-stroke:.25px #5a626b">To Third</div>
<svg class="a" style="left:1365.3px;top:587.4px" width="10" height="12" viewBox="0 0 10 12"><path d="M1.800 3.200 H8.200 V10.400 C8.200 10.900 7.900 11.200 7.400 11.200 H2.600 C2.100 11.200 1.800 10.900 1.800 10.400 Z" fill="none" stroke="#e4705f" stroke-width="1.300"/><path d="M0.800 1.500 H9.200" stroke="#e4705f" stroke-width="1.400"/><path d="M3.500 0.700 H6.500" stroke="#e4705f" stroke-width="1.200"/></svg>
<svg class="a" style="left:1447.1px;top:591.452px" width="11.8" height="7.096000000000001" viewBox="-1 -1 11.8 7.096000000000001"><path d="M0 0 L4.9 4.596000000000001 L9.8 0" fill="none" stroke="#555" stroke-width="1.65" stroke-linecap="round" stroke-linejoin="round"/></svg>
<div class="a" style="left:429px;top:615px;width:1050px;height:1px;background:#d9d9d9"></div>
<div class="inp" style="left:466px;top:622px;width:134px;height:31.5px"></div>
<div class="txt" style="left:476px;top:629px;font-size:14px;line-height:18px;color:#414a54;letter-spacing:.3px">7</div>
<div class="txt" style="left:636px;top:631px;width:120px;text-align:center;font-size:11.500px;line-height:14px;color:#2c333b;letter-spacing:.3px;-webkit-text-stroke:.15px #2c333b">08/04/2023</div>
<div class="inp" style="left:793px;top:623px;width:216px;height:30px"></div>
<div class="txt" style="left:801px;top:628px;font-size:14px;line-height:18px;color:#46555f;letter-spacing:.2px">8/4/2023</div>
<svg class="a" style="left:884.4000000000001px;top:629.9000000000001px" width="14.6" height="14.6" viewBox="0 0 24 24"><path fill="#333" d="M19 4h-1V2h-2v2H8V2H6v2H5c-1.1 0-2 .9-2 2v14c0 1.1.9 2 2 2h14c1.1 0 2-.9 2-2V6c0-1.1-.9-2-2-2zm0 16H5V10h14v10zm0-12H5V6h14v2zm-7 5h5v5h-5z"/></svg>
<div class="txt" style="left:936px;top:628.5px;font-size:14px;line-height:18px;color:#555d66;letter-spacing:.2px">14:00</div>
<svg class="a" style="left:984.0px;top:630.5px" width="14" height="14" viewBox="0 0 24 24"><path fill="#222" d="M11.99 2C6.47 2 2 6.48 2 12s4.47 10 9.99 10C17.52 22 22 17.52 22 12S17.520 2 11.99 2zM12 20c-4.42 0-8-3.58-8-8s3.58-8 8-8 8 3.58 8 8-3.58 8-8 8zm.5-13H11v6l5.250 3.150.75-1.230-4.500-2.670z"/></svg>
<div class="a" style="left:1039px;top:632.5px;width:16px;height:16px;border:1.300px solid #55606b;border-radius:2.500px;background:#fff"></div>
<div class="txt" style="left:1063px;top:632.7px;font-size:11px;line-height:14px;color:#5a626b;-webkit-text-stroke:.25px #5a626b">Invalid</div>
<div class="a" style="left:1202px;top:632.5px;width:16px;height:16px;border:1.300px solid #55606b;border-radius:2.500px;background:#fff"></div>
<div class="txt" style="left:1227px;top:632.7px;font-size:11px;line-height:14px;color:#5a626b;-webkit-text-stroke:.25px #5a626b">To Third</div>
<svg class="a" style="left:1365.3px;top:633.4px" width="10" height="12" viewBox="0 0 10 12"><path d="M1.800 3.200 H8.200 V10.400 C8.200 10.900 7.900 11.200 7.400 11.200 H2.600 C2.100 11.200 1.800 10.900 1.800 10.400 Z" fill="none" stroke="#e4705f" stroke-width="1.300"/><path d="M0.800 1.500 H9.200" stroke="#e4705f" stroke-width="1.400"/><path d="M3.500 0.700 H6.500" stroke="#e4705f" stroke-width="1.200"/></svg>
<svg class="a" style="left:1447.1px;top:637.452px" width="11.8" height="7.096000000000001" viewBox="-1 -1 11.8 7.096000000000001"><path d="M0 0 L4.9 4.596000000000001 L9.8 0" fill="none" stroke="#555" stroke-width="1.65" stroke-linecap="round" stroke-linejoin="round"/></svg>
<div class="a" style="left:429px;top:661px;width:1050px;height:1px;background:#d9d9d9"></div>
<div class="inp" style="left:466px;top:668px;width:134px;height:31.5px"></div>
<div class="txt" style="left:476px;top:675px;font-size:14px;line-height:18px;color:#414a54;letter-spacing:.3px">28</div>
<div class="txt" style="left:636px;top:677px;width:120px;text-align:center;font-size:11.500px;line-height:14px;color:#2c333b;letter-spacing:.3px;-webkit-text-stroke:.15px #2c333b">29/04/2023</div>
<div class="inp" style="left:793px;top:669px;width:216px;height:30px"></div>
<div class="txt" style="left:801px;top:674px;font-size:14px;line-height:18px;color:#46555f;letter-spacing:.2px">2/5/2023</div>
<svg class="a" style="left:884.4000000000001px;top:675.9000000000001px" width="14.6" height="14.6" viewBox="0 0 24 24"><path fill="#333" d="M19 4h-1V2h-2v2H8V2H6v2H5c-1.1 0-2 .9-2 2v14c0 1.1.9 2 2 2h14c1.1 0 2-.9 2-2V6c0-1.1-.9-2-2-2zm0 16H5V10h14v10zm0-12H5V6h14v2zm-7 5h5v5h-5z"/></svg>
<div class="txt" style="left:936px;top:674.5px;font-size:14px;line-height:18px;color:#555d66;letter-spacing:.2px">09:09</div>
<svg class="a" style="left:984.0px;top:676.5px" width="14" height="14" viewBox="0 0 24 24"><path fill="#222" d="M11.99 2C6.47 2 2 6.48 2 12s4.47 10 9.99 10C17.52 22 22 17.52 22 12S17.520 2 11.99 2zM12 20c-4.42 0-8-3.58-8-8s3.58-8 8-8 8 3.58 8 8-3.58 8-8 8zm.5-13H11v6l5.250 3.150.75-1.230-4.500-2.670z"/></svg>
<div class="a" style="left:1039px;top:678.5px;width:16px;height:16px;border:1.300px solid #55606b;border-radius:2.500px;background:#fff"></div>
<div class="txt" style="left:1063px;top:678.7px;font-size:11px;line-height:14px;color:#5a626b;-webkit-text-stroke:.25px #5a626b">Invalid</div>
<div class="a" style="left:1202px;top:678.5px;width:16px;height:16px;border:1.300px solid #55606b;border-radius:2.500px;background:#fff"></div>
<div class="txt" style="left:1227px;top:678.7px;font-size:11px;line-height:14px;color:#5a626b;-webkit-text-stroke:.25px #5a626b">To Third</div>
<svg class="a" style="left:1365.3px;top:679.4px" width="10" height="12" viewBox="0 0 10 12"><path d="M1.800 3.200 H8.200 V10.400 C8.200 10.900 7.900 11.200 7.400 11.200 H2.600 C2.100 11.200 1.800 10.900 1.800 10.400 Z" fill="none" stroke="#e4705f" stroke-width="1.300"/><path d="M0.800 1.500 H9.200" stroke="#e4705f" stroke-width="1.400"/><path d="M3.500 0.700 H6.500" stroke="#e4705f" stroke-width="1.200"/></svg>
<svg class="a" style="left:1447.1px;top:683.452px" width="11.8" height="7.096000000000001" viewBox="-1 -1 11.8 7.096000000000001"><path d="M0 0 L4.9 4.596000000000001 L9.8 0" fill="none" stroke="#555" stroke-width="1.65" stroke-linecap="round" stroke-linejoin="round"/></svg>
<div class="a" style="left:429px;top:707px;width:1050px;height:1px;background:#d9d9d9"></div>
<div class="inp" style="left:466px;top:714px;width:134px;height:31.5px"></div>
<div class="txt" style="left:476px;top:721px;font-size:14px;line-height:18px;color:#414a54;letter-spacing:.3px">28</div>
<div class="txt" style="left:636px;top:723px;width:120px;text-align:center;font-size:11.500px;line-height:14px;color:#2c333b;letter-spacing:.3px;-webkit-text-stroke:.15px #2c333b">29/04/2023</div>
<div class="inp" style="left:793px;top:715px;width:216px;height:30px"></div>
<div class="txt" style="left:801px;top:720px;font-size:14px;line-height:18px;color:#46555f;letter-spacing:.2px">2/5/2023</div>
<svg class="a" style="left:884.4000000000001px;top:721.9000000000001px" width="14.6" height="14.6" viewBox="0 0 24 24"><path fill="#333" d="M19 4h-1V2h-2v2H8V2H6v2H5c-1.1 0-2 .9-2 2v14c0 1.1.9 2 2 2h14c1.1 0 2-.9 2-2V6c0-1.1-.9-2-2-2zm0 16H5V10h14v10zm0-12H5V6h14v2zm-7 5h5v5h-5z"/></svg>
<div class="txt" style="left:936px;top:720.5px;font-size:14px;line-height:18px;color:#555d66;letter-spacing:.2px">09:09</div>
<svg class="a" style="left:984.0px;top:722.5px" width="14" height="14" viewBox="0 0 24 24"><path fill="#222" d="M11.99 2C6.47 2 2 6.48 2 12s4.47 10 9.99 10C17.52 22 22 17.52 22 12S17.520 2 11.99 2zM12 20c-4.42 0-8-3.58-8-8s3.58-8 8-8 8 3.58 8 8-3.58 8-8 8zm.5-13H11v6l5.250 3.150.75-1.230-4.500-2.670z"/></svg>
<div class="a" style="left:1039px;top:724.5px;width:16px;height:16px;border:1.300px solid #55606b;border-radius:2.500px;background:#fff"></div>
<div class="txt" style="left:1063px;top:724.7px;font-size:11px;line-height:14px;color:#5a626b;-webkit-text-stroke:.25px #5a626b">Invalid</div>
<div class="a" style="left:1202px;top:724.5px;width:16px;height:16px;border:1.300px solid #55606b;border-radius:2.500px;background:#fff"></div>
<div class="txt" style="left:1227px;top:724.7px;font-size:11px;line-height:14px;color:#5a626b;-webkit-text-stroke:.25px #5a626b">To Third</div>
<svg class="a" style="left:1365.3px;top:725.4px" width="10" height="12" viewBox="0 0 10 12"><path d="M1.800 3.200 H8.200 V10.400 C8.200 10.900 7.900 11.200 7.400 11.200 H2.600 C2.100 11.200 1.800 10.900 1.800 10.400 Z" fill="none" stroke="#e4705f" stroke-width="1.300"/><path d="M0.800 1.500 H9.200" stroke="#e4705f" stroke-width="1.400"/><path d="M3.500 0.700 H6.500" stroke="#e4705f" stroke-width="1.200"/></svg>
<svg class="a" style="left:1447.1px;top:729.452px" width="11.8" height="7.096000000000001" viewBox="-1 -1 11.8 7.096000000000001"><path d="M0 0 L4.9 4.596000000000001 L9.8 0" fill="none" stroke="#555" stroke-width="1.65" stroke-linecap="round" stroke-linejoin="round"/></svg>
<div class="a" style="left:426px;top:762px;width:1056px;height:30px;border:1px dashed #cfcfcf;border-radius:4px;background:#fff"></div>
<svg class="a" style="left:445px;top:772px" width="9" height="9" viewBox="0 0 9 9"><path d="M4.500 0.500 V8.500 M0.500 4.500 H8.500" stroke="#3b4cc4" stroke-width="1"/></svg>
<div class="txt" style="left:464px;top:768.800px;font-size:12.900px;line-height:16px;color:#3446b8">Add Samples</div>
<div class="a" style="left:1501px;top:174.500px;width:6px;height:630px;border-radius:3px;background:#d2d2d2"></div>
<div class="txt" style="left:1374px;top:832.500px;font-size:14.300px;line-height:18px;color:#3f4bf5;-webkit-text-stroke:.3px #3f4bf5;letter-spacing:-.42px">Save and Close</div>
<svg class="a" style="left:1496px;top:864px" width="12" height="12" viewBox="0 0 12 12"><path d="M11.500 1.500 L1.500 11.500 M11.500 6 L6 11.500" stroke="#666" stroke-width="1"/></svg>
</div></div>
</div></body></html>
